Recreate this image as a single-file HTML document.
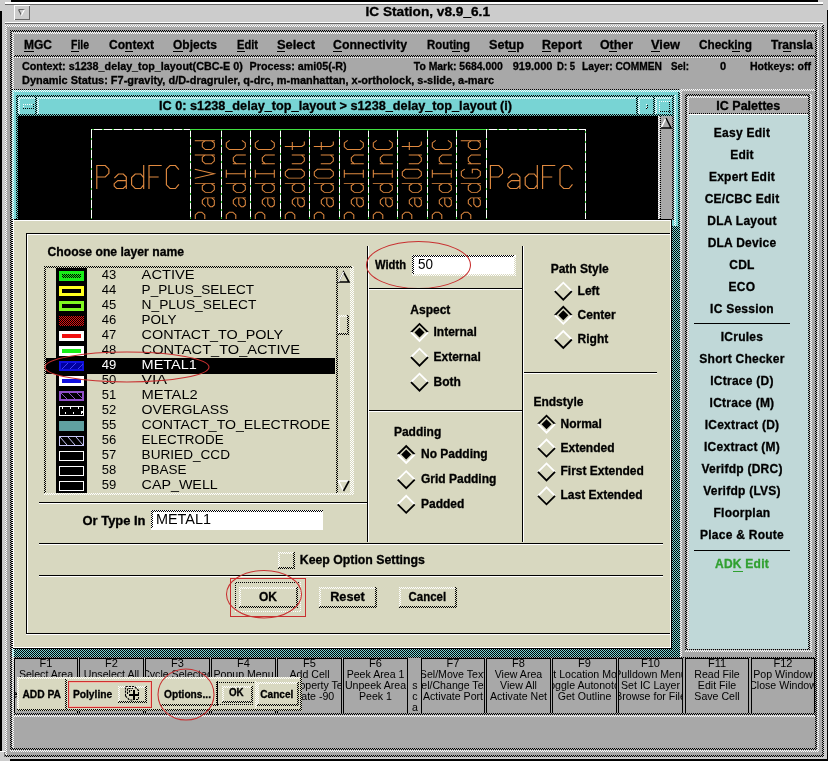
<!DOCTYPE html><html><head><meta charset="utf-8"><style>html,body{margin:0;padding:0;background:#a8a8a8;overflow:hidden}svg{display:block;will-change:transform}text{font-family:"Liberation Sans",sans-serif}</style></head><body>
<svg width="828" height="761" viewBox="0 0 828 761" shape-rendering="crispEdges">
<defs><pattern id="k" width="2" height="2" patternUnits="userSpaceOnUse"><rect width="1" height="1" fill="#000"/><rect x="1" y="1" width="1" height="1" fill="#000"/></pattern><pattern id="w" width="2" height="2" patternUnits="userSpaceOnUse"><rect width="1" height="1" fill="#fff"/><rect x="1" y="1" width="1" height="1" fill="#fff"/></pattern><pattern id="k2" width="2" height="2" patternUnits="userSpaceOnUse"><rect x="1" width="1" height="1" fill="#000"/><rect y="1" width="1" height="1" fill="#000"/></pattern><pattern id="w2" width="2" height="2" patternUnits="userSpaceOnUse"><rect x="1" width="1" height="1" fill="#fff"/><rect y="1" width="1" height="1" fill="#fff"/></pattern></defs>
<rect x="0" y="0" width="828" height="761" fill="#000" />
<rect x="2" y="2" width="825" height="757" fill="#cccccc" />
<rect x="5" y="25" width="818" height="732" fill="#a8a8a8" />
<rect x="5" y="25" width="818" height="732" fill="url(#w)" />
<rect x="822" y="25" width="2" height="732" fill="url(#k)" />
<rect x="5" y="755" width="819" height="2" fill="url(#k)" />
<rect x="7" y="27" width="815" height="728" fill="#a8a8a8" />
<rect x="2" y="2" width="824" height="22" fill="#cccccc" />
<rect x="0" y="0" width="11" height="2" fill="#cccccc" />
<rect x="0" y="0" width="2" height="11" fill="#cccccc" />
<rect x="818" y="0" width="10" height="2" fill="#cccccc" />
<rect x="826" y="0" width="2" height="10" fill="#cccccc" />
<rect x="11" y="0" width="807" height="2" fill="#000" />
<rect x="5" y="2" width="818" height="2" fill="#fff" />
<rect x="5" y="4" width="818" height="1" fill="#666" />
<rect x="5" y="22" width="818" height="1" fill="#fff" />
<rect x="5" y="23" width="818" height="1" fill="#666" />
<rect x="14" y="5" width="16" height="15" fill="#cccccc" />
<rect x="14" y="5" width="16" height="1" fill="#fff" />
<rect x="14" y="5" width="1" height="15" fill="#fff" />
<rect x="15" y="19" width="15" height="1" fill="#666" />
<rect x="29" y="6" width="1" height="14" fill="#666" />
<path d="M18.5 9.5 L24.5 9.5" stroke="#666" stroke-width="1" fill="none"/>
<path d="M18.5 9.5 L21.3 15" stroke="#555" stroke-width="1.1" fill="none" shape-rendering="auto"/>
<path d="M24.5 9.5 L21.3 15.5" stroke="#fff" stroke-width="1.1" fill="none" shape-rendering="auto"/>
<text x="365.5" y="15.5" font-size="12" font-weight="bold" fill="#000" stroke="#000" stroke-width="0.3" text-anchor="start" textLength="124.5" lengthAdjust="spacingAndGlyphs" >IC Station, v8.9_6.1</text>
<rect x="12" y="32" width="803" height="23" fill="#a8a8a8" />
<rect x="12" y="55" width="803" height="2" fill="url(#k)" />
<rect x="12" y="57" width="803" height="1" fill="url(#w)" />
<text x="24" y="49" font-size="12" font-weight="bold" fill="#000" stroke="#000" stroke-width="0.3" text-anchor="start" textLength="28" lengthAdjust="spacingAndGlyphs" >MGC</text>
<text x="71" y="49" font-size="12" font-weight="bold" fill="#000" stroke="#000" stroke-width="0.3" text-anchor="start" textLength="18" lengthAdjust="spacingAndGlyphs" >File</text>
<text x="109" y="49" font-size="12" font-weight="bold" fill="#000" stroke="#000" stroke-width="0.3" text-anchor="start" textLength="45" lengthAdjust="spacingAndGlyphs" >Context</text>
<text x="173" y="49" font-size="12" font-weight="bold" fill="#000" stroke="#000" stroke-width="0.3" text-anchor="start" textLength="44" lengthAdjust="spacingAndGlyphs" >Objects</text>
<text x="237" y="49" font-size="12" font-weight="bold" fill="#000" stroke="#000" stroke-width="0.3" text-anchor="start" textLength="21" lengthAdjust="spacingAndGlyphs" >Edit</text>
<text x="277" y="49" font-size="12" font-weight="bold" fill="#000" stroke="#000" stroke-width="0.3" text-anchor="start" textLength="38" lengthAdjust="spacingAndGlyphs" >Select</text>
<text x="333" y="49" font-size="12" font-weight="bold" fill="#000" stroke="#000" stroke-width="0.3" text-anchor="start" textLength="74" lengthAdjust="spacingAndGlyphs" >Connectivity</text>
<text x="427" y="49" font-size="12" font-weight="bold" fill="#000" stroke="#000" stroke-width="0.3" text-anchor="start" textLength="43" lengthAdjust="spacingAndGlyphs" >Routing</text>
<text x="489" y="49" font-size="12" font-weight="bold" fill="#000" stroke="#000" stroke-width="0.3" text-anchor="start" textLength="35" lengthAdjust="spacingAndGlyphs" >Setup</text>
<text x="542" y="49" font-size="12" font-weight="bold" fill="#000" stroke="#000" stroke-width="0.3" text-anchor="start" textLength="40" lengthAdjust="spacingAndGlyphs" >Report</text>
<text x="600" y="49" font-size="12" font-weight="bold" fill="#000" stroke="#000" stroke-width="0.3" text-anchor="start" textLength="33" lengthAdjust="spacingAndGlyphs" >Other</text>
<text x="651" y="49" font-size="12" font-weight="bold" fill="#000" stroke="#000" stroke-width="0.3" text-anchor="start" textLength="29" lengthAdjust="spacingAndGlyphs" >View</text>
<text x="699" y="49" font-size="12" font-weight="bold" fill="#000" stroke="#000" stroke-width="0.3" text-anchor="start" textLength="53" lengthAdjust="spacingAndGlyphs" >Checking</text>
<text x="771" y="49" font-size="12" font-weight="bold" fill="#000" stroke="#000" stroke-width="0.3" text-anchor="start" textLength="42" lengthAdjust="spacingAndGlyphs" >Transla</text>
<rect x="24" y="51" width="10" height="1" fill="#000" />
<rect x="71" y="51" width="8" height="1" fill="#000" />
<rect x="125" y="51" width="8" height="1" fill="#000" />
<rect x="173" y="51" width="10" height="1" fill="#000" />
<rect x="237" y="51" width="8" height="1" fill="#000" />
<rect x="277" y="51" width="8" height="1" fill="#000" />
<rect x="333" y="51" width="9" height="1" fill="#000" />
<rect x="452" y="51" width="8" height="1" fill="#000" />
<rect x="508" y="51" width="8" height="1" fill="#000" />
<rect x="542" y="51" width="9" height="1" fill="#000" />
<rect x="609" y="51" width="8" height="1" fill="#000" />
<rect x="651" y="51" width="9" height="1" fill="#000" />
<rect x="732" y="51" width="8" height="1" fill="#000" />
<rect x="783" y="51" width="8" height="1" fill="#000" />
<text x="22" y="69.5" font-size="11" font-weight="bold" fill="#000" stroke="#000" stroke-width="0.3" text-anchor="start" textLength="220.8" lengthAdjust="spacingAndGlyphs" >Context: s1238_delay_top_layout(CBC-E 0)</text>
<text x="249.6" y="69.5" font-size="11" font-weight="bold" fill="#000" stroke="#000" stroke-width="0.3" text-anchor="start" textLength="97" lengthAdjust="spacingAndGlyphs" >Process: ami05(-R)</text>
<text x="413.8" y="69.5" font-size="11" font-weight="bold" fill="#000" stroke="#000" stroke-width="0.3" text-anchor="start" textLength="89" lengthAdjust="spacingAndGlyphs" >To Mark: 5684.000</text>
<text x="512.7" y="69.5" font-size="11" font-weight="bold" fill="#000" stroke="#000" stroke-width="0.3" text-anchor="start" >919.000</text>
<text x="557" y="69.5" font-size="11" font-weight="bold" fill="#000" stroke="#000" stroke-width="0.3" text-anchor="start" textLength="18" lengthAdjust="spacingAndGlyphs" >D: 5</text>
<text x="582" y="69.5" font-size="11" font-weight="bold" fill="#000" stroke="#000" stroke-width="0.3" text-anchor="start" textLength="80" lengthAdjust="spacingAndGlyphs" >Layer: COMMEN</text>
<text x="671" y="69.5" font-size="11" font-weight="bold" fill="#000" stroke="#000" stroke-width="0.3" text-anchor="start" textLength="18" lengthAdjust="spacingAndGlyphs" >Sel:</text>
<text x="720" y="69.5" font-size="11" font-weight="bold" fill="#000" stroke="#000" stroke-width="0.3" text-anchor="start" >0</text>
<text x="750" y="69.5" font-size="11" font-weight="bold" fill="#000" stroke="#000" stroke-width="0.3" text-anchor="start" textLength="61" lengthAdjust="spacingAndGlyphs" >Hotkeys: off</text>
<text x="22" y="84" font-size="11" font-weight="bold" fill="#000" stroke="#000" stroke-width="0.3" text-anchor="start" textLength="472" lengthAdjust="spacingAndGlyphs" >Dynamic Status: F7-gravity, d/D-dragruler, q-drc, m-manhattan, x-ortholock, s-slide, a-marc</text>
<rect x="12" y="89" width="1" height="1" fill="#000" />
<rect x="14" y="89" width="1" height="1" fill="#000" />
<rect x="16" y="89" width="1" height="1" fill="#000" />
<rect x="18" y="89" width="1" height="1" fill="#000" />
<rect x="20" y="89" width="1" height="1" fill="#000" />
<rect x="22" y="89" width="1" height="1" fill="#000" />
<rect x="24" y="89" width="1" height="1" fill="#000" />
<rect x="26" y="89" width="1" height="1" fill="#000" />
<rect x="28" y="89" width="1" height="1" fill="#000" />
<rect x="30" y="89" width="1" height="1" fill="#000" />
<rect x="32" y="89" width="1" height="1" fill="#000" />
<rect x="34" y="89" width="1" height="1" fill="#000" />
<rect x="36" y="89" width="1" height="1" fill="#000" />
<rect x="38" y="89" width="1" height="1" fill="#000" />
<rect x="40" y="89" width="1" height="1" fill="#000" />
<rect x="42" y="89" width="1" height="1" fill="#000" />
<rect x="44" y="89" width="1" height="1" fill="#000" />
<rect x="46" y="89" width="1" height="1" fill="#000" />
<rect x="48" y="89" width="1" height="1" fill="#000" />
<rect x="50" y="89" width="1" height="1" fill="#000" />
<rect x="52" y="89" width="1" height="1" fill="#000" />
<rect x="54" y="89" width="1" height="1" fill="#000" />
<rect x="56" y="89" width="1" height="1" fill="#000" />
<rect x="58" y="89" width="1" height="1" fill="#000" />
<rect x="60" y="89" width="1" height="1" fill="#000" />
<rect x="62" y="89" width="1" height="1" fill="#000" />
<rect x="64" y="89" width="1" height="1" fill="#000" />
<rect x="66" y="89" width="1" height="1" fill="#000" />
<rect x="68" y="89" width="1" height="1" fill="#000" />
<rect x="70" y="89" width="1" height="1" fill="#000" />
<rect x="72" y="89" width="1" height="1" fill="#000" />
<rect x="74" y="89" width="1" height="1" fill="#000" />
<rect x="76" y="89" width="1" height="1" fill="#000" />
<rect x="78" y="89" width="1" height="1" fill="#000" />
<rect x="80" y="89" width="1" height="1" fill="#000" />
<rect x="82" y="89" width="1" height="1" fill="#000" />
<rect x="84" y="89" width="1" height="1" fill="#000" />
<rect x="86" y="89" width="1" height="1" fill="#000" />
<rect x="88" y="89" width="1" height="1" fill="#000" />
<rect x="90" y="89" width="1" height="1" fill="#000" />
<rect x="92" y="89" width="1" height="1" fill="#000" />
<rect x="94" y="89" width="1" height="1" fill="#000" />
<rect x="96" y="89" width="1" height="1" fill="#000" />
<rect x="98" y="89" width="1" height="1" fill="#000" />
<rect x="100" y="89" width="1" height="1" fill="#000" />
<rect x="102" y="89" width="1" height="1" fill="#000" />
<rect x="104" y="89" width="1" height="1" fill="#000" />
<rect x="106" y="89" width="1" height="1" fill="#000" />
<rect x="108" y="89" width="1" height="1" fill="#000" />
<rect x="110" y="89" width="1" height="1" fill="#000" />
<rect x="112" y="89" width="1" height="1" fill="#000" />
<rect x="114" y="89" width="1" height="1" fill="#000" />
<rect x="116" y="89" width="1" height="1" fill="#000" />
<rect x="118" y="89" width="1" height="1" fill="#000" />
<rect x="120" y="89" width="1" height="1" fill="#000" />
<rect x="122" y="89" width="1" height="1" fill="#000" />
<rect x="124" y="89" width="1" height="1" fill="#000" />
<rect x="126" y="89" width="1" height="1" fill="#000" />
<rect x="128" y="89" width="1" height="1" fill="#000" />
<rect x="130" y="89" width="1" height="1" fill="#000" />
<rect x="132" y="89" width="1" height="1" fill="#000" />
<rect x="134" y="89" width="1" height="1" fill="#000" />
<rect x="136" y="89" width="1" height="1" fill="#000" />
<rect x="138" y="89" width="1" height="1" fill="#000" />
<rect x="140" y="89" width="1" height="1" fill="#000" />
<rect x="142" y="89" width="1" height="1" fill="#000" />
<rect x="144" y="89" width="1" height="1" fill="#000" />
<rect x="146" y="89" width="1" height="1" fill="#000" />
<rect x="148" y="89" width="1" height="1" fill="#000" />
<rect x="150" y="89" width="1" height="1" fill="#000" />
<rect x="152" y="89" width="1" height="1" fill="#000" />
<rect x="154" y="89" width="1" height="1" fill="#000" />
<rect x="156" y="89" width="1" height="1" fill="#000" />
<rect x="158" y="89" width="1" height="1" fill="#000" />
<rect x="160" y="89" width="1" height="1" fill="#000" />
<rect x="162" y="89" width="1" height="1" fill="#000" />
<rect x="164" y="89" width="1" height="1" fill="#000" />
<rect x="166" y="89" width="1" height="1" fill="#000" />
<rect x="168" y="89" width="1" height="1" fill="#000" />
<rect x="170" y="89" width="1" height="1" fill="#000" />
<rect x="172" y="89" width="1" height="1" fill="#000" />
<rect x="174" y="89" width="1" height="1" fill="#000" />
<rect x="176" y="89" width="1" height="1" fill="#000" />
<rect x="178" y="89" width="1" height="1" fill="#000" />
<rect x="180" y="89" width="1" height="1" fill="#000" />
<rect x="182" y="89" width="1" height="1" fill="#000" />
<rect x="184" y="89" width="1" height="1" fill="#000" />
<rect x="186" y="89" width="1" height="1" fill="#000" />
<rect x="188" y="89" width="1" height="1" fill="#000" />
<rect x="190" y="89" width="1" height="1" fill="#000" />
<rect x="192" y="89" width="1" height="1" fill="#000" />
<rect x="194" y="89" width="1" height="1" fill="#000" />
<rect x="196" y="89" width="1" height="1" fill="#000" />
<rect x="198" y="89" width="1" height="1" fill="#000" />
<rect x="200" y="89" width="1" height="1" fill="#000" />
<rect x="202" y="89" width="1" height="1" fill="#000" />
<rect x="204" y="89" width="1" height="1" fill="#000" />
<rect x="206" y="89" width="1" height="1" fill="#000" />
<rect x="208" y="89" width="1" height="1" fill="#000" />
<rect x="210" y="89" width="1" height="1" fill="#000" />
<rect x="212" y="89" width="1" height="1" fill="#000" />
<rect x="214" y="89" width="1" height="1" fill="#000" />
<rect x="216" y="89" width="1" height="1" fill="#000" />
<rect x="218" y="89" width="1" height="1" fill="#000" />
<rect x="220" y="89" width="1" height="1" fill="#000" />
<rect x="222" y="89" width="1" height="1" fill="#000" />
<rect x="224" y="89" width="1" height="1" fill="#000" />
<rect x="226" y="89" width="1" height="1" fill="#000" />
<rect x="228" y="89" width="1" height="1" fill="#000" />
<rect x="230" y="89" width="1" height="1" fill="#000" />
<rect x="232" y="89" width="1" height="1" fill="#000" />
<rect x="234" y="89" width="1" height="1" fill="#000" />
<rect x="236" y="89" width="1" height="1" fill="#000" />
<rect x="238" y="89" width="1" height="1" fill="#000" />
<rect x="240" y="89" width="1" height="1" fill="#000" />
<rect x="242" y="89" width="1" height="1" fill="#000" />
<rect x="244" y="89" width="1" height="1" fill="#000" />
<rect x="246" y="89" width="1" height="1" fill="#000" />
<rect x="248" y="89" width="1" height="1" fill="#000" />
<rect x="250" y="89" width="1" height="1" fill="#000" />
<rect x="252" y="89" width="1" height="1" fill="#000" />
<rect x="254" y="89" width="1" height="1" fill="#000" />
<rect x="256" y="89" width="1" height="1" fill="#000" />
<rect x="258" y="89" width="1" height="1" fill="#000" />
<rect x="260" y="89" width="1" height="1" fill="#000" />
<rect x="262" y="89" width="1" height="1" fill="#000" />
<rect x="264" y="89" width="1" height="1" fill="#000" />
<rect x="266" y="89" width="1" height="1" fill="#000" />
<rect x="268" y="89" width="1" height="1" fill="#000" />
<rect x="270" y="89" width="1" height="1" fill="#000" />
<rect x="272" y="89" width="1" height="1" fill="#000" />
<rect x="274" y="89" width="1" height="1" fill="#000" />
<rect x="276" y="89" width="1" height="1" fill="#000" />
<rect x="278" y="89" width="1" height="1" fill="#000" />
<rect x="280" y="89" width="1" height="1" fill="#000" />
<rect x="282" y="89" width="1" height="1" fill="#000" />
<rect x="284" y="89" width="1" height="1" fill="#000" />
<rect x="286" y="89" width="1" height="1" fill="#000" />
<rect x="288" y="89" width="1" height="1" fill="#000" />
<rect x="290" y="89" width="1" height="1" fill="#000" />
<rect x="292" y="89" width="1" height="1" fill="#000" />
<rect x="294" y="89" width="1" height="1" fill="#000" />
<rect x="296" y="89" width="1" height="1" fill="#000" />
<rect x="298" y="89" width="1" height="1" fill="#000" />
<rect x="300" y="89" width="1" height="1" fill="#000" />
<rect x="302" y="89" width="1" height="1" fill="#000" />
<rect x="304" y="89" width="1" height="1" fill="#000" />
<rect x="306" y="89" width="1" height="1" fill="#000" />
<rect x="308" y="89" width="1" height="1" fill="#000" />
<rect x="310" y="89" width="1" height="1" fill="#000" />
<rect x="312" y="89" width="1" height="1" fill="#000" />
<rect x="314" y="89" width="1" height="1" fill="#000" />
<rect x="316" y="89" width="1" height="1" fill="#000" />
<rect x="318" y="89" width="1" height="1" fill="#000" />
<rect x="320" y="89" width="1" height="1" fill="#000" />
<rect x="322" y="89" width="1" height="1" fill="#000" />
<rect x="324" y="89" width="1" height="1" fill="#000" />
<rect x="326" y="89" width="1" height="1" fill="#000" />
<rect x="328" y="89" width="1" height="1" fill="#000" />
<rect x="330" y="89" width="1" height="1" fill="#000" />
<rect x="332" y="89" width="1" height="1" fill="#000" />
<rect x="334" y="89" width="1" height="1" fill="#000" />
<rect x="336" y="89" width="1" height="1" fill="#000" />
<rect x="338" y="89" width="1" height="1" fill="#000" />
<rect x="340" y="89" width="1" height="1" fill="#000" />
<rect x="342" y="89" width="1" height="1" fill="#000" />
<rect x="344" y="89" width="1" height="1" fill="#000" />
<rect x="346" y="89" width="1" height="1" fill="#000" />
<rect x="348" y="89" width="1" height="1" fill="#000" />
<rect x="350" y="89" width="1" height="1" fill="#000" />
<rect x="352" y="89" width="1" height="1" fill="#000" />
<rect x="354" y="89" width="1" height="1" fill="#000" />
<rect x="356" y="89" width="1" height="1" fill="#000" />
<rect x="358" y="89" width="1" height="1" fill="#000" />
<rect x="360" y="89" width="1" height="1" fill="#000" />
<rect x="362" y="89" width="1" height="1" fill="#000" />
<rect x="364" y="89" width="1" height="1" fill="#000" />
<rect x="366" y="89" width="1" height="1" fill="#000" />
<rect x="368" y="89" width="1" height="1" fill="#000" />
<rect x="370" y="89" width="1" height="1" fill="#000" />
<rect x="372" y="89" width="1" height="1" fill="#000" />
<rect x="374" y="89" width="1" height="1" fill="#000" />
<rect x="376" y="89" width="1" height="1" fill="#000" />
<rect x="378" y="89" width="1" height="1" fill="#000" />
<rect x="380" y="89" width="1" height="1" fill="#000" />
<rect x="382" y="89" width="1" height="1" fill="#000" />
<rect x="384" y="89" width="1" height="1" fill="#000" />
<rect x="386" y="89" width="1" height="1" fill="#000" />
<rect x="388" y="89" width="1" height="1" fill="#000" />
<rect x="390" y="89" width="1" height="1" fill="#000" />
<rect x="392" y="89" width="1" height="1" fill="#000" />
<rect x="394" y="89" width="1" height="1" fill="#000" />
<rect x="396" y="89" width="1" height="1" fill="#000" />
<rect x="398" y="89" width="1" height="1" fill="#000" />
<rect x="400" y="89" width="1" height="1" fill="#000" />
<rect x="402" y="89" width="1" height="1" fill="#000" />
<rect x="404" y="89" width="1" height="1" fill="#000" />
<rect x="406" y="89" width="1" height="1" fill="#000" />
<rect x="408" y="89" width="1" height="1" fill="#000" />
<rect x="410" y="89" width="1" height="1" fill="#000" />
<rect x="412" y="89" width="1" height="1" fill="#000" />
<rect x="414" y="89" width="1" height="1" fill="#000" />
<rect x="416" y="89" width="1" height="1" fill="#000" />
<rect x="418" y="89" width="1" height="1" fill="#000" />
<rect x="420" y="89" width="1" height="1" fill="#000" />
<rect x="422" y="89" width="1" height="1" fill="#000" />
<rect x="424" y="89" width="1" height="1" fill="#000" />
<rect x="426" y="89" width="1" height="1" fill="#000" />
<rect x="428" y="89" width="1" height="1" fill="#000" />
<rect x="430" y="89" width="1" height="1" fill="#000" />
<rect x="432" y="89" width="1" height="1" fill="#000" />
<rect x="434" y="89" width="1" height="1" fill="#000" />
<rect x="436" y="89" width="1" height="1" fill="#000" />
<rect x="438" y="89" width="1" height="1" fill="#000" />
<rect x="440" y="89" width="1" height="1" fill="#000" />
<rect x="442" y="89" width="1" height="1" fill="#000" />
<rect x="444" y="89" width="1" height="1" fill="#000" />
<rect x="446" y="89" width="1" height="1" fill="#000" />
<rect x="448" y="89" width="1" height="1" fill="#000" />
<rect x="450" y="89" width="1" height="1" fill="#000" />
<rect x="452" y="89" width="1" height="1" fill="#000" />
<rect x="454" y="89" width="1" height="1" fill="#000" />
<rect x="456" y="89" width="1" height="1" fill="#000" />
<rect x="458" y="89" width="1" height="1" fill="#000" />
<rect x="460" y="89" width="1" height="1" fill="#000" />
<rect x="462" y="89" width="1" height="1" fill="#000" />
<rect x="464" y="89" width="1" height="1" fill="#000" />
<rect x="466" y="89" width="1" height="1" fill="#000" />
<rect x="468" y="89" width="1" height="1" fill="#000" />
<rect x="470" y="89" width="1" height="1" fill="#000" />
<rect x="472" y="89" width="1" height="1" fill="#000" />
<rect x="474" y="89" width="1" height="1" fill="#000" />
<rect x="476" y="89" width="1" height="1" fill="#000" />
<rect x="478" y="89" width="1" height="1" fill="#000" />
<rect x="480" y="89" width="1" height="1" fill="#000" />
<rect x="482" y="89" width="1" height="1" fill="#000" />
<rect x="484" y="89" width="1" height="1" fill="#000" />
<rect x="486" y="89" width="1" height="1" fill="#000" />
<rect x="488" y="89" width="1" height="1" fill="#000" />
<rect x="490" y="89" width="1" height="1" fill="#000" />
<rect x="492" y="89" width="1" height="1" fill="#000" />
<rect x="494" y="89" width="1" height="1" fill="#000" />
<rect x="496" y="89" width="1" height="1" fill="#000" />
<rect x="498" y="89" width="1" height="1" fill="#000" />
<rect x="500" y="89" width="1" height="1" fill="#000" />
<rect x="502" y="89" width="1" height="1" fill="#000" />
<rect x="504" y="89" width="1" height="1" fill="#000" />
<rect x="506" y="89" width="1" height="1" fill="#000" />
<rect x="508" y="89" width="1" height="1" fill="#000" />
<rect x="510" y="89" width="1" height="1" fill="#000" />
<rect x="512" y="89" width="1" height="1" fill="#000" />
<rect x="514" y="89" width="1" height="1" fill="#000" />
<rect x="516" y="89" width="1" height="1" fill="#000" />
<rect x="518" y="89" width="1" height="1" fill="#000" />
<rect x="520" y="89" width="1" height="1" fill="#000" />
<rect x="522" y="89" width="1" height="1" fill="#000" />
<rect x="524" y="89" width="1" height="1" fill="#000" />
<rect x="526" y="89" width="1" height="1" fill="#000" />
<rect x="528" y="89" width="1" height="1" fill="#000" />
<rect x="530" y="89" width="1" height="1" fill="#000" />
<rect x="532" y="89" width="1" height="1" fill="#000" />
<rect x="534" y="89" width="1" height="1" fill="#000" />
<rect x="536" y="89" width="1" height="1" fill="#000" />
<rect x="538" y="89" width="1" height="1" fill="#000" />
<rect x="540" y="89" width="1" height="1" fill="#000" />
<rect x="542" y="89" width="1" height="1" fill="#000" />
<rect x="544" y="89" width="1" height="1" fill="#000" />
<rect x="546" y="89" width="1" height="1" fill="#000" />
<rect x="548" y="89" width="1" height="1" fill="#000" />
<rect x="550" y="89" width="1" height="1" fill="#000" />
<rect x="552" y="89" width="1" height="1" fill="#000" />
<rect x="554" y="89" width="1" height="1" fill="#000" />
<rect x="556" y="89" width="1" height="1" fill="#000" />
<rect x="558" y="89" width="1" height="1" fill="#000" />
<rect x="560" y="89" width="1" height="1" fill="#000" />
<rect x="562" y="89" width="1" height="1" fill="#000" />
<rect x="564" y="89" width="1" height="1" fill="#000" />
<rect x="566" y="89" width="1" height="1" fill="#000" />
<rect x="568" y="89" width="1" height="1" fill="#000" />
<rect x="570" y="89" width="1" height="1" fill="#000" />
<rect x="572" y="89" width="1" height="1" fill="#000" />
<rect x="574" y="89" width="1" height="1" fill="#000" />
<rect x="576" y="89" width="1" height="1" fill="#000" />
<rect x="578" y="89" width="1" height="1" fill="#000" />
<rect x="580" y="89" width="1" height="1" fill="#000" />
<rect x="582" y="89" width="1" height="1" fill="#000" />
<rect x="584" y="89" width="1" height="1" fill="#000" />
<rect x="586" y="89" width="1" height="1" fill="#000" />
<rect x="588" y="89" width="1" height="1" fill="#000" />
<rect x="590" y="89" width="1" height="1" fill="#000" />
<rect x="592" y="89" width="1" height="1" fill="#000" />
<rect x="594" y="89" width="1" height="1" fill="#000" />
<rect x="596" y="89" width="1" height="1" fill="#000" />
<rect x="598" y="89" width="1" height="1" fill="#000" />
<rect x="600" y="89" width="1" height="1" fill="#000" />
<rect x="602" y="89" width="1" height="1" fill="#000" />
<rect x="604" y="89" width="1" height="1" fill="#000" />
<rect x="606" y="89" width="1" height="1" fill="#000" />
<rect x="608" y="89" width="1" height="1" fill="#000" />
<rect x="610" y="89" width="1" height="1" fill="#000" />
<rect x="612" y="89" width="1" height="1" fill="#000" />
<rect x="614" y="89" width="1" height="1" fill="#000" />
<rect x="616" y="89" width="1" height="1" fill="#000" />
<rect x="618" y="89" width="1" height="1" fill="#000" />
<rect x="620" y="89" width="1" height="1" fill="#000" />
<rect x="622" y="89" width="1" height="1" fill="#000" />
<rect x="624" y="89" width="1" height="1" fill="#000" />
<rect x="626" y="89" width="1" height="1" fill="#000" />
<rect x="628" y="89" width="1" height="1" fill="#000" />
<rect x="630" y="89" width="1" height="1" fill="#000" />
<rect x="632" y="89" width="1" height="1" fill="#000" />
<rect x="634" y="89" width="1" height="1" fill="#000" />
<rect x="636" y="89" width="1" height="1" fill="#000" />
<rect x="638" y="89" width="1" height="1" fill="#000" />
<rect x="640" y="89" width="1" height="1" fill="#000" />
<rect x="642" y="89" width="1" height="1" fill="#000" />
<rect x="644" y="89" width="1" height="1" fill="#000" />
<rect x="646" y="89" width="1" height="1" fill="#000" />
<rect x="648" y="89" width="1" height="1" fill="#000" />
<rect x="650" y="89" width="1" height="1" fill="#000" />
<rect x="652" y="89" width="1" height="1" fill="#000" />
<rect x="654" y="89" width="1" height="1" fill="#000" />
<rect x="656" y="89" width="1" height="1" fill="#000" />
<rect x="658" y="89" width="1" height="1" fill="#000" />
<rect x="660" y="89" width="1" height="1" fill="#000" />
<rect x="662" y="89" width="1" height="1" fill="#000" />
<rect x="664" y="89" width="1" height="1" fill="#000" />
<rect x="666" y="89" width="1" height="1" fill="#000" />
<rect x="668" y="89" width="1" height="1" fill="#000" />
<rect x="670" y="89" width="1" height="1" fill="#000" />
<rect x="672" y="89" width="1" height="1" fill="#000" />
<rect x="674" y="89" width="1" height="1" fill="#000" />
<rect x="676" y="89" width="1" height="1" fill="#000" />
<rect x="678" y="89" width="1" height="1" fill="#000" />
<rect x="680" y="89" width="135" height="2" fill="url(#w)" />
<rect x="12" y="90" width="668" height="567" fill="#78d4d4" />
<rect x="12" y="90" width="668" height="2" fill="url(#w)" />
<rect x="12" y="90" width="2" height="567" fill="url(#w)" />
<rect x="678" y="92" width="2" height="565" fill="url(#k)" />
<rect x="680" y="90" width="2" height="567" fill="url(#w)" />
<rect x="16" y="95" width="660" height="2" fill="url(#k)" />
<rect x="16" y="95" width="2" height="562" fill="url(#k)" />
<rect x="674" y="95" width="2" height="562" fill="url(#w)" />
<rect x="18" y="97" width="656" height="2" fill="url(#w)" />
<rect x="18" y="97" width="2" height="17" fill="url(#w)" />
<rect x="35" y="97" width="2" height="17" fill="url(#k)" />
<rect x="37" y="99" width="2" height="15" fill="url(#w)" />
<rect x="636" y="97" width="2" height="17" fill="url(#k)" />
<rect x="638" y="99" width="2" height="15" fill="url(#w)" />
<rect x="653" y="97" width="2" height="17" fill="url(#k)" />
<rect x="655" y="99" width="2" height="15" fill="url(#w)" />
<rect x="672" y="97" width="2" height="19" fill="url(#k)" />
<rect x="18" y="114" width="656" height="2" fill="url(#k)" />
<rect x="23" y="104" width="1" height="1" fill="#fff" />
<rect x="25" y="104" width="1" height="1" fill="#fff" />
<rect x="27" y="104" width="1" height="1" fill="#fff" />
<rect x="29" y="104" width="1" height="1" fill="#fff" />
<rect x="31" y="104" width="1" height="1" fill="#fff" />
<rect x="33" y="104" width="1" height="1" fill="#fff" />
<rect x="23" y="106" width="1" height="1" fill="#fff" />
<rect x="23" y="108" width="1" height="1" fill="#000" />
<rect x="25" y="108" width="1" height="1" fill="#000" />
<rect x="27" y="108" width="1" height="1" fill="#000" />
<rect x="29" y="108" width="1" height="1" fill="#000" />
<rect x="31" y="108" width="1" height="1" fill="#000" />
<rect x="33" y="108" width="1" height="1" fill="#000" />
<rect x="33" y="106" width="1" height="1" fill="#000" />
<rect x="33" y="104" width="1" height="1" fill="#000" />
<rect x="646" y="104" width="1" height="1" fill="#fff" />
<rect x="647" y="105" width="1" height="1" fill="#000" />
<rect x="646" y="107" width="1" height="1" fill="#fff" />
<rect x="646" y="108" width="1" height="1" fill="#000" />
<rect x="647" y="107" width="1" height="1" fill="#000" />
<rect x="659" y="101" width="1" height="1" fill="#fff" />
<rect x="659" y="101" width="1" height="1" fill="#fff" />
<rect x="661" y="101" width="1" height="1" fill="#fff" />
<rect x="659" y="103" width="1" height="1" fill="#fff" />
<rect x="663" y="101" width="1" height="1" fill="#fff" />
<rect x="659" y="105" width="1" height="1" fill="#fff" />
<rect x="665" y="101" width="1" height="1" fill="#fff" />
<rect x="659" y="107" width="1" height="1" fill="#fff" />
<rect x="667" y="101" width="1" height="1" fill="#fff" />
<rect x="659" y="109" width="1" height="1" fill="#fff" />
<rect x="669" y="101" width="1" height="1" fill="#fff" />
<rect x="659" y="111" width="1" height="1" fill="#fff" />
<rect x="660" y="111" width="1" height="1" fill="#000" />
<rect x="669" y="102" width="1" height="1" fill="#000" />
<rect x="662" y="111" width="1" height="1" fill="#000" />
<rect x="669" y="104" width="1" height="1" fill="#000" />
<rect x="664" y="111" width="1" height="1" fill="#000" />
<rect x="669" y="106" width="1" height="1" fill="#000" />
<rect x="666" y="111" width="1" height="1" fill="#000" />
<rect x="669" y="108" width="1" height="1" fill="#000" />
<rect x="668" y="111" width="1" height="1" fill="#000" />
<rect x="669" y="110" width="1" height="1" fill="#000" />
<rect x="670" y="111" width="1" height="1" fill="#000" />
<rect x="669" y="112" width="1" height="1" fill="#000" />
<text x="159" y="110" font-size="12" font-weight="bold" fill="#000" stroke="#000" stroke-width="0.3" text-anchor="start" textLength="353" lengthAdjust="spacingAndGlyphs" >IC 0: s1238_delay_top_layout &gt; s1238_delay_top_layout (i)</text>
<rect x="18" y="116" width="640" height="104" fill="#000" />
<rect x="658" y="116" width="16" height="104" fill="#a8a8a8" />
<rect x="658" y="116" width="2" height="104" fill="url(#w)" />
<rect x="660" y="116" width="1" height="104" fill="url(#k)" />
<rect x="672" y="116" width="2" height="104" fill="url(#k)" />
<path d="M666 118 L661 128 L671 128 Z" fill="#a8a8a8" shape-rendering="auto"/>
<path d="M666 118 L661 128" stroke="#fff" stroke-width="1.5" shape-rendering="auto"/>
<path d="M666 118 L671 128 L661 128" stroke="#000" stroke-width="1.5" fill="none" shape-rendering="auto"/>
<defs><clipPath id="canv"><rect x="18" y="116" width="640" height="104"/></clipPath></defs>
<g clip-path="url(#canv)">
<rect x="91.5" y="129.5" width="99" height="111" fill="none" stroke="#fff" stroke-width="1"/>
<rect x="91.5" y="129.5" width="99" height="111" fill="none" stroke="#30c030" stroke-width="1" stroke-dasharray="2 8"/>
<rect x="486.5" y="129.5" width="99" height="111" fill="none" stroke="#fff" stroke-width="1"/>
<rect x="486.5" y="129.5" width="99" height="111" fill="none" stroke="#30c030" stroke-width="1" stroke-dasharray="2 8"/>
<g transform="translate(96.8 188.5) scale(1.21)" fill="none" stroke="#e08a40" stroke-width="0.95" stroke-linecap="square" stroke-linejoin="miter" shape-rendering="auto"><path transform="translate(0.00 0)" d="M0 0 V-19 H7 L10 -16 V-12.5 L7 -9.5 H0"/><path transform="translate(14.38 0)" d="M0.5 -9 L3.5 -12 H7.5 L10 -9.5 V0 M10 -6.5 H3 L0 -4 V-2 L2 0 H7.5 L10 -2.5"/><path transform="translate(28.76 0)" d="M10 -19 V0 M10 -3 L7.5 0 H3 L0 -3 V-9 L3 -12 H7.5 L10 -9"/><path transform="translate(43.14 0)" d="M10 -19 H0 V0 M0 -9.5 H7.5"/><path transform="translate(57.52 0)" d="M10 -16 L7.5 -19 H3 L0 -16 V-3 L3 0 H7.5 L10 -3"/></g>
<g transform="translate(490.4 188.5) scale(1.21)" fill="none" stroke="#e08a40" stroke-width="0.95" stroke-linecap="square" stroke-linejoin="miter" shape-rendering="auto"><path transform="translate(0.00 0)" d="M0 0 V-19 H7 L10 -16 V-12.5 L7 -9.5 H0"/><path transform="translate(14.38 0)" d="M0.5 -9 L3.5 -12 H7.5 L10 -9.5 V0 M10 -6.5 H3 L0 -4 V-2 L2 0 H7.5 L10 -2.5"/><path transform="translate(28.76 0)" d="M10 -19 V0 M10 -3 L7.5 0 H3 L0 -3 V-9 L3 -12 H7.5 L10 -9"/><path transform="translate(43.14 0)" d="M10 -19 H0 V0 M0 -9.5 H7.5"/><path transform="translate(57.52 0)" d="M10 -16 L7.5 -19 H3 L0 -16 V-3 L3 0 H7.5 L10 -3"/></g>
<line x1="190.5" y1="129" x2="190.5" y2="220" stroke="#fff"/>
<line x1="190.5" y1="129" x2="190.5" y2="220" stroke="#30c030" stroke-dasharray="2 6"/>
<g transform="translate(214.3 221) rotate(-90) scale(0.88 1)" fill="none" stroke="#e08a40" stroke-width="1.05" stroke-linecap="square" stroke-linejoin="miter" shape-rendering="auto"><path transform="translate(0.00 0)" d="M0 0 V-19 H7 L10 -16 V-12.5 L7 -9.5 H0"/><path transform="translate(16.25 0)" d="M0.5 -9 L3.5 -12 H7.5 L10 -9.5 V0 M10 -6.5 H3 L0 -4 V-2 L2 0 H7.5 L10 -2.5"/><path transform="translate(32.50 0)" d="M10 -19 V0 M10 -3 L7.5 0 H3 L0 -3 V-9 L3 -12 H7.5 L10 -9"/><path transform="translate(48.75 0)" d="M0 -19 L5 0 L10 -19"/><path transform="translate(65.00 0)" d="M10 -19 V0 M10 -3 L7.5 0 H3 L0 -3 V-9 L3 -12 H7.5 L10 -9"/><path transform="translate(81.25 0)" d="M10 -19 V0 M10 -3 L7.5 0 H3 L0 -3 V-9 L3 -12 H7.5 L10 -9"/></g>
<line x1="221.5" y1="129" x2="221.5" y2="220" stroke="#fff"/>
<line x1="221.5" y1="129" x2="221.5" y2="220" stroke="#30c030" stroke-dasharray="2 6"/>
<g transform="translate(245.3 221) rotate(-90) scale(0.88 1)" fill="none" stroke="#e08a40" stroke-width="1.05" stroke-linecap="square" stroke-linejoin="miter" shape-rendering="auto"><path transform="translate(0.00 0)" d="M0 0 V-19 H7 L10 -16 V-12.5 L7 -9.5 H0"/><path transform="translate(16.25 0)" d="M0.5 -9 L3.5 -12 H7.5 L10 -9.5 V0 M10 -6.5 H3 L0 -4 V-2 L2 0 H7.5 L10 -2.5"/><path transform="translate(32.50 0)" d="M10 -19 V0 M10 -3 L7.5 0 H3 L0 -3 V-9 L3 -12 H7.5 L10 -9"/><path transform="translate(48.75 0)" d="M1 -19 H9 M5 -19 V0 M1 0 H9"/><path transform="translate(65.00 0)" d="M0 -12 V0 M0 -9 L3 -12 H7 L10 -9 V0"/><path transform="translate(81.25 0)" d="M10 -16 L7.5 -19 H3 L0 -16 V-3 L3 0 H7.5 L10 -3"/></g>
<line x1="250.5" y1="129" x2="250.5" y2="220" stroke="#fff"/>
<line x1="250.5" y1="129" x2="250.5" y2="220" stroke="#30c030" stroke-dasharray="2 6"/>
<g transform="translate(274.3 221) rotate(-90) scale(0.88 1)" fill="none" stroke="#e08a40" stroke-width="1.05" stroke-linecap="square" stroke-linejoin="miter" shape-rendering="auto"><path transform="translate(0.00 0)" d="M0 0 V-19 H7 L10 -16 V-12.5 L7 -9.5 H0"/><path transform="translate(16.25 0)" d="M0.5 -9 L3.5 -12 H7.5 L10 -9.5 V0 M10 -6.5 H3 L0 -4 V-2 L2 0 H7.5 L10 -2.5"/><path transform="translate(32.50 0)" d="M10 -19 V0 M10 -3 L7.5 0 H3 L0 -3 V-9 L3 -12 H7.5 L10 -9"/><path transform="translate(48.75 0)" d="M1 -19 H9 M5 -19 V0 M1 0 H9"/><path transform="translate(65.00 0)" d="M0 -12 V0 M0 -9 L3 -12 H7 L10 -9 V0"/><path transform="translate(81.25 0)" d="M10 -16 L7.5 -19 H3 L0 -16 V-3 L3 0 H7.5 L10 -3"/></g>
<line x1="280.5" y1="129" x2="280.5" y2="220" stroke="#fff"/>
<line x1="280.5" y1="129" x2="280.5" y2="220" stroke="#30c030" stroke-dasharray="2 6"/>
<g transform="translate(304.3 221) rotate(-90) scale(0.88 1)" fill="none" stroke="#e08a40" stroke-width="1.05" stroke-linecap="square" stroke-linejoin="miter" shape-rendering="auto"><path transform="translate(0.00 0)" d="M0 0 V-19 H7 L10 -16 V-12.5 L7 -9.5 H0"/><path transform="translate(16.25 0)" d="M0.5 -9 L3.5 -12 H7.5 L10 -9.5 V0 M10 -6.5 H3 L0 -4 V-2 L2 0 H7.5 L10 -2.5"/><path transform="translate(32.50 0)" d="M10 -19 V0 M10 -3 L7.5 0 H3 L0 -3 V-9 L3 -12 H7.5 L10 -9"/><path transform="translate(48.75 0)" d="M3 -19 H7 L10 -16 V-3 L7 0 H3 L0 -3 V-16 Z"/><path transform="translate(65.00 0)" d="M0 -12 V-3 L3 0 H7 L10 -3 M10 -12 V0"/><path transform="translate(81.25 0)" d="M3.5 -19 V-2.5 L5.5 0 H8.5 M0 -12 H8"/></g>
<line x1="309.5" y1="129" x2="309.5" y2="220" stroke="#fff"/>
<line x1="309.5" y1="129" x2="309.5" y2="220" stroke="#30c030" stroke-dasharray="2 6"/>
<g transform="translate(333.3 221) rotate(-90) scale(0.88 1)" fill="none" stroke="#e08a40" stroke-width="1.05" stroke-linecap="square" stroke-linejoin="miter" shape-rendering="auto"><path transform="translate(0.00 0)" d="M0 0 V-19 H7 L10 -16 V-12.5 L7 -9.5 H0"/><path transform="translate(16.25 0)" d="M0.5 -9 L3.5 -12 H7.5 L10 -9.5 V0 M10 -6.5 H3 L0 -4 V-2 L2 0 H7.5 L10 -2.5"/><path transform="translate(32.50 0)" d="M10 -19 V0 M10 -3 L7.5 0 H3 L0 -3 V-9 L3 -12 H7.5 L10 -9"/><path transform="translate(48.75 0)" d="M3 -19 H7 L10 -16 V-3 L7 0 H3 L0 -3 V-16 Z"/><path transform="translate(65.00 0)" d="M0 -12 V-3 L3 0 H7 L10 -3 M10 -12 V0"/><path transform="translate(81.25 0)" d="M3.5 -19 V-2.5 L5.5 0 H8.5 M0 -12 H8"/></g>
<line x1="339.5" y1="129" x2="339.5" y2="220" stroke="#fff"/>
<line x1="339.5" y1="129" x2="339.5" y2="220" stroke="#30c030" stroke-dasharray="2 6"/>
<g transform="translate(363.3 221) rotate(-90) scale(0.88 1)" fill="none" stroke="#e08a40" stroke-width="1.05" stroke-linecap="square" stroke-linejoin="miter" shape-rendering="auto"><path transform="translate(0.00 0)" d="M0 0 V-19 H7 L10 -16 V-12.5 L7 -9.5 H0"/><path transform="translate(16.25 0)" d="M0.5 -9 L3.5 -12 H7.5 L10 -9.5 V0 M10 -6.5 H3 L0 -4 V-2 L2 0 H7.5 L10 -2.5"/><path transform="translate(32.50 0)" d="M10 -19 V0 M10 -3 L7.5 0 H3 L0 -3 V-9 L3 -12 H7.5 L10 -9"/><path transform="translate(48.75 0)" d="M1 -19 H9 M5 -19 V0 M1 0 H9"/><path transform="translate(65.00 0)" d="M0 -12 V0 M0 -9 L3 -12 H7 L10 -9 V0"/><path transform="translate(81.25 0)" d="M10 -16 L7.5 -19 H3 L0 -16 V-3 L3 0 H7.5 L10 -3"/></g>
<line x1="368.5" y1="129" x2="368.5" y2="220" stroke="#fff"/>
<line x1="368.5" y1="129" x2="368.5" y2="220" stroke="#30c030" stroke-dasharray="2 6"/>
<g transform="translate(392.3 221) rotate(-90) scale(0.88 1)" fill="none" stroke="#e08a40" stroke-width="1.05" stroke-linecap="square" stroke-linejoin="miter" shape-rendering="auto"><path transform="translate(0.00 0)" d="M0 0 V-19 H7 L10 -16 V-12.5 L7 -9.5 H0"/><path transform="translate(16.25 0)" d="M0.5 -9 L3.5 -12 H7.5 L10 -9.5 V0 M10 -6.5 H3 L0 -4 V-2 L2 0 H7.5 L10 -2.5"/><path transform="translate(32.50 0)" d="M10 -19 V0 M10 -3 L7.5 0 H3 L0 -3 V-9 L3 -12 H7.5 L10 -9"/><path transform="translate(48.75 0)" d="M1 -19 H9 M5 -19 V0 M1 0 H9"/><path transform="translate(65.00 0)" d="M0 -12 V0 M0 -9 L3 -12 H7 L10 -9 V0"/><path transform="translate(81.25 0)" d="M10 -16 L7.5 -19 H3 L0 -16 V-3 L3 0 H7.5 L10 -3"/></g>
<line x1="397.5" y1="129" x2="397.5" y2="220" stroke="#fff"/>
<line x1="397.5" y1="129" x2="397.5" y2="220" stroke="#30c030" stroke-dasharray="2 6"/>
<g transform="translate(421.3 221) rotate(-90) scale(0.88 1)" fill="none" stroke="#e08a40" stroke-width="1.05" stroke-linecap="square" stroke-linejoin="miter" shape-rendering="auto"><path transform="translate(0.00 0)" d="M0 0 V-19 H7 L10 -16 V-12.5 L7 -9.5 H0"/><path transform="translate(16.25 0)" d="M0.5 -9 L3.5 -12 H7.5 L10 -9.5 V0 M10 -6.5 H3 L0 -4 V-2 L2 0 H7.5 L10 -2.5"/><path transform="translate(32.50 0)" d="M10 -19 V0 M10 -3 L7.5 0 H3 L0 -3 V-9 L3 -12 H7.5 L10 -9"/><path transform="translate(48.75 0)" d="M3 -19 H7 L10 -16 V-3 L7 0 H3 L0 -3 V-16 Z"/><path transform="translate(65.00 0)" d="M0 -12 V-3 L3 0 H7 L10 -3 M10 -12 V0"/><path transform="translate(81.25 0)" d="M3.5 -19 V-2.5 L5.5 0 H8.5 M0 -12 H8"/></g>
<line x1="427.5" y1="129" x2="427.5" y2="220" stroke="#fff"/>
<line x1="427.5" y1="129" x2="427.5" y2="220" stroke="#30c030" stroke-dasharray="2 6"/>
<g transform="translate(451.3 221) rotate(-90) scale(0.88 1)" fill="none" stroke="#e08a40" stroke-width="1.05" stroke-linecap="square" stroke-linejoin="miter" shape-rendering="auto"><path transform="translate(0.00 0)" d="M0 0 V-19 H7 L10 -16 V-12.5 L7 -9.5 H0"/><path transform="translate(16.25 0)" d="M0.5 -9 L3.5 -12 H7.5 L10 -9.5 V0 M10 -6.5 H3 L0 -4 V-2 L2 0 H7.5 L10 -2.5"/><path transform="translate(32.50 0)" d="M10 -19 V0 M10 -3 L7.5 0 H3 L0 -3 V-9 L3 -12 H7.5 L10 -9"/><path transform="translate(48.75 0)" d="M1 -19 H9 M5 -19 V0 M1 0 H9"/><path transform="translate(65.00 0)" d="M0 -12 V0 M0 -9 L3 -12 H7 L10 -9 V0"/><path transform="translate(81.25 0)" d="M10 -16 L7.5 -19 H3 L0 -16 V-3 L3 0 H7.5 L10 -3"/></g>
<line x1="456.5" y1="129" x2="456.5" y2="220" stroke="#fff"/>
<line x1="456.5" y1="129" x2="456.5" y2="220" stroke="#30c030" stroke-dasharray="2 6"/>
<g transform="translate(480.3 221) rotate(-90) scale(0.88 1)" fill="none" stroke="#e08a40" stroke-width="1.05" stroke-linecap="square" stroke-linejoin="miter" shape-rendering="auto"><path transform="translate(0.00 0)" d="M0 0 V-19 H7 L10 -16 V-12.5 L7 -9.5 H0"/><path transform="translate(16.25 0)" d="M0.5 -9 L3.5 -12 H7.5 L10 -9.5 V0 M10 -6.5 H3 L0 -4 V-2 L2 0 H7.5 L10 -2.5"/><path transform="translate(32.50 0)" d="M10 -19 V0 M10 -3 L7.5 0 H3 L0 -3 V-9 L3 -12 H7.5 L10 -9"/><path transform="translate(48.75 0)" d="M10 -16 L7.5 -19 H3 L0 -16 V-3 L3 0 H7.5 L10 -3 V-8 H6"/><path transform="translate(65.00 0)" d="M0 -12 V0 M0 -9 L3 -12 H7 L10 -9 V0"/><path transform="translate(81.25 0)" d="M10 -19 V0 M10 -3 L7.5 0 H3 L0 -3 V-9 L3 -12 H7.5 L10 -9"/></g>
<rect x="190" y="129" width="296" height="1" fill="#40e040" />
</g>
<rect x="685" y="94" width="127" height="2" fill="#a8a8a8" />
<rect x="685" y="94" width="127" height="2" fill="url(#k)" />
<rect x="685" y="94" width="2" height="558" fill="#a8a8a8" />
<rect x="685" y="94" width="2" height="558" fill="url(#k)" />
<rect x="687" y="96" width="123" height="2" fill="url(#w)" />
<rect x="687" y="96" width="2" height="554" fill="url(#w)" />
<rect x="689" y="98" width="119" height="15" fill="#a8a8a8" />
<text x="716.3" y="109.7" font-size="12" font-weight="bold" fill="#000" stroke="#000" stroke-width="0.3" text-anchor="start" textLength="64" lengthAdjust="spacingAndGlyphs" >IC Palettes</text>
<rect x="689" y="113" width="1" height="1" fill="#000" />
<rect x="691" y="113" width="1" height="1" fill="#000" />
<rect x="693" y="113" width="1" height="1" fill="#000" />
<rect x="695" y="113" width="1" height="1" fill="#000" />
<rect x="697" y="113" width="1" height="1" fill="#000" />
<rect x="699" y="113" width="1" height="1" fill="#000" />
<rect x="701" y="113" width="1" height="1" fill="#000" />
<rect x="703" y="113" width="1" height="1" fill="#000" />
<rect x="705" y="113" width="1" height="1" fill="#000" />
<rect x="707" y="113" width="1" height="1" fill="#000" />
<rect x="709" y="113" width="1" height="1" fill="#000" />
<rect x="711" y="113" width="1" height="1" fill="#000" />
<rect x="713" y="113" width="1" height="1" fill="#000" />
<rect x="715" y="113" width="1" height="1" fill="#000" />
<rect x="717" y="113" width="1" height="1" fill="#000" />
<rect x="719" y="113" width="1" height="1" fill="#000" />
<rect x="721" y="113" width="1" height="1" fill="#000" />
<rect x="723" y="113" width="1" height="1" fill="#000" />
<rect x="725" y="113" width="1" height="1" fill="#000" />
<rect x="727" y="113" width="1" height="1" fill="#000" />
<rect x="729" y="113" width="1" height="1" fill="#000" />
<rect x="731" y="113" width="1" height="1" fill="#000" />
<rect x="733" y="113" width="1" height="1" fill="#000" />
<rect x="735" y="113" width="1" height="1" fill="#000" />
<rect x="737" y="113" width="1" height="1" fill="#000" />
<rect x="739" y="113" width="1" height="1" fill="#000" />
<rect x="741" y="113" width="1" height="1" fill="#000" />
<rect x="743" y="113" width="1" height="1" fill="#000" />
<rect x="745" y="113" width="1" height="1" fill="#000" />
<rect x="747" y="113" width="1" height="1" fill="#000" />
<rect x="749" y="113" width="1" height="1" fill="#000" />
<rect x="751" y="113" width="1" height="1" fill="#000" />
<rect x="753" y="113" width="1" height="1" fill="#000" />
<rect x="755" y="113" width="1" height="1" fill="#000" />
<rect x="757" y="113" width="1" height="1" fill="#000" />
<rect x="759" y="113" width="1" height="1" fill="#000" />
<rect x="761" y="113" width="1" height="1" fill="#000" />
<rect x="763" y="113" width="1" height="1" fill="#000" />
<rect x="765" y="113" width="1" height="1" fill="#000" />
<rect x="767" y="113" width="1" height="1" fill="#000" />
<rect x="769" y="113" width="1" height="1" fill="#000" />
<rect x="771" y="113" width="1" height="1" fill="#000" />
<rect x="773" y="113" width="1" height="1" fill="#000" />
<rect x="775" y="113" width="1" height="1" fill="#000" />
<rect x="777" y="113" width="1" height="1" fill="#000" />
<rect x="779" y="113" width="1" height="1" fill="#000" />
<rect x="781" y="113" width="1" height="1" fill="#000" />
<rect x="783" y="113" width="1" height="1" fill="#000" />
<rect x="785" y="113" width="1" height="1" fill="#000" />
<rect x="787" y="113" width="1" height="1" fill="#000" />
<rect x="789" y="113" width="1" height="1" fill="#000" />
<rect x="791" y="113" width="1" height="1" fill="#000" />
<rect x="793" y="113" width="1" height="1" fill="#000" />
<rect x="795" y="113" width="1" height="1" fill="#000" />
<rect x="797" y="113" width="1" height="1" fill="#000" />
<rect x="799" y="113" width="1" height="1" fill="#000" />
<rect x="801" y="113" width="1" height="1" fill="#000" />
<rect x="803" y="113" width="1" height="1" fill="#000" />
<rect x="805" y="113" width="1" height="1" fill="#000" />
<rect x="807" y="113" width="1" height="1" fill="#000" />
<rect x="689" y="114" width="119" height="1" fill="#fff" />
<rect x="689" y="115" width="120" height="534" fill="#c0d8d8" />
<rect x="808" y="96" width="2" height="554" fill="url(#k)" />
<rect x="687" y="649" width="123" height="2" fill="url(#k)" />
<rect x="810" y="94" width="2" height="558" fill="url(#w)" />
<rect x="685" y="650" width="127" height="2" fill="url(#w)" />
<text x="742" y="136.8" font-size="12" font-weight="bold" fill="#000" stroke="#000" stroke-width="0.3" text-anchor="middle" letter-spacing="0.25">Easy Edit</text>
<text x="742" y="158.8" font-size="12" font-weight="bold" fill="#000" stroke="#000" stroke-width="0.3" text-anchor="middle" letter-spacing="0.25">Edit</text>
<text x="742" y="180.8" font-size="12" font-weight="bold" fill="#000" stroke="#000" stroke-width="0.3" text-anchor="middle" letter-spacing="0.25">Expert Edit</text>
<text x="742" y="202.8" font-size="12" font-weight="bold" fill="#000" stroke="#000" stroke-width="0.3" text-anchor="middle" letter-spacing="0.25">CE/CBC Edit</text>
<text x="742" y="224.8" font-size="12" font-weight="bold" fill="#000" stroke="#000" stroke-width="0.3" text-anchor="middle" letter-spacing="0.25">DLA Layout</text>
<text x="742" y="246.8" font-size="12" font-weight="bold" fill="#000" stroke="#000" stroke-width="0.3" text-anchor="middle" letter-spacing="0.25">DLA Device</text>
<text x="742" y="268.8" font-size="12" font-weight="bold" fill="#000" stroke="#000" stroke-width="0.3" text-anchor="middle" letter-spacing="0.25">CDL</text>
<text x="742" y="290.8" font-size="12" font-weight="bold" fill="#000" stroke="#000" stroke-width="0.3" text-anchor="middle" letter-spacing="0.25">ECO</text>
<text x="742" y="312.8" font-size="12" font-weight="bold" fill="#000" stroke="#000" stroke-width="0.3" text-anchor="middle" letter-spacing="0.25">IC Session</text>
<rect x="694" y="323" width="96" height="1" fill="#000" />
<text x="742" y="341.3" font-size="12" font-weight="bold" fill="#000" stroke="#000" stroke-width="0.3" text-anchor="middle" letter-spacing="0.25">ICrules</text>
<text x="742" y="363.3" font-size="12" font-weight="bold" fill="#000" stroke="#000" stroke-width="0.3" text-anchor="middle" letter-spacing="0.25">Short Checker</text>
<text x="742" y="385.3" font-size="12" font-weight="bold" fill="#000" stroke="#000" stroke-width="0.3" text-anchor="middle" letter-spacing="0.25">ICtrace (D)</text>
<text x="742" y="407.3" font-size="12" font-weight="bold" fill="#000" stroke="#000" stroke-width="0.3" text-anchor="middle" letter-spacing="0.25">ICtrace (M)</text>
<text x="742" y="429.3" font-size="12" font-weight="bold" fill="#000" stroke="#000" stroke-width="0.3" text-anchor="middle" letter-spacing="0.25">ICextract (D)</text>
<text x="742" y="451.3" font-size="12" font-weight="bold" fill="#000" stroke="#000" stroke-width="0.3" text-anchor="middle" letter-spacing="0.25">ICextract (M)</text>
<text x="742" y="473.3" font-size="12" font-weight="bold" fill="#000" stroke="#000" stroke-width="0.3" text-anchor="middle" letter-spacing="0.25">Verifdp (DRC)</text>
<text x="742" y="495.3" font-size="12" font-weight="bold" fill="#000" stroke="#000" stroke-width="0.3" text-anchor="middle" letter-spacing="0.25">Verifdp (LVS)</text>
<text x="742" y="517.3" font-size="12" font-weight="bold" fill="#000" stroke="#000" stroke-width="0.3" text-anchor="middle" letter-spacing="0.25">Floorplan</text>
<text x="742" y="539.3" font-size="12" font-weight="bold" fill="#000" stroke="#000" stroke-width="0.3" text-anchor="middle" letter-spacing="0.25">Place &amp; Route</text>
<rect x="694" y="550" width="96" height="1" fill="#000" />
<text x="742" y="568.4" font-size="12" font-weight="bold" fill="#30a030" stroke="#30a030" stroke-width="0.3" text-anchor="middle" letter-spacing="0.25">ADK Edit</text>
<rect x="733" y="571" width="10" height="1" fill="#30a030" />
<rect x="12" y="219" width="660" height="430" fill="#000" />
<rect x="13" y="220" width="658" height="428" fill="#fff" />
<rect x="14" y="221" width="656" height="426" fill="#d8d8c0" />
<rect x="26" y="233" width="644" height="1" fill="#000" />
<rect x="27" y="234" width="643" height="1" fill="#fff" />
<rect x="26" y="233" width="1" height="401" fill="#000" />
<rect x="27" y="234" width="1" height="399" fill="#fff" />
<rect x="26" y="633" width="644" height="1" fill="#000" />
<rect x="26" y="634" width="644" height="1" fill="#fff" />
<text x="47.5" y="255.5" font-size="12" font-weight="bold" fill="#000" stroke="#000" stroke-width="0.3" text-anchor="start" textLength="136.5" lengthAdjust="spacingAndGlyphs" >Choose one layer name</text>
<rect x="44" y="266" width="310" height="2" fill="url(#k)" />
<rect x="44" y="266" width="2" height="229" fill="url(#k)" />
<rect x="44" y="493" width="310" height="2" fill="url(#w)" />
<rect x="352" y="266" width="2" height="229" fill="url(#w)" />
<rect x="56" y="268" width="31" height="225" fill="#000" />
<rect x="46" y="358" width="289" height="16" fill="#000" />
<text x="101.8" y="278.5" font-size="12.5" font-weight="normal" fill="#000" text-anchor="start" textLength="14.5" lengthAdjust="spacingAndGlyphs" >43</text>
<text x="141.6" y="278.5" font-size="12.5" font-weight="normal" fill="#000" text-anchor="start" textLength="53" lengthAdjust="spacingAndGlyphs" >ACTIVE</text>
<text x="101.8" y="293.5" font-size="12.5" font-weight="normal" fill="#000" text-anchor="start" textLength="14.5" lengthAdjust="spacingAndGlyphs" >44</text>
<text x="141.6" y="293.5" font-size="12.5" font-weight="normal" fill="#000" text-anchor="start" textLength="112.5" lengthAdjust="spacingAndGlyphs" >P_PLUS_SELECT</text>
<text x="101.8" y="308.5" font-size="12.5" font-weight="normal" fill="#000" text-anchor="start" textLength="14.5" lengthAdjust="spacingAndGlyphs" >45</text>
<text x="141.6" y="308.5" font-size="12.5" font-weight="normal" fill="#000" text-anchor="start" textLength="114.7" lengthAdjust="spacingAndGlyphs" >N_PLUS_SELECT</text>
<text x="101.8" y="323.5" font-size="12.5" font-weight="normal" fill="#000" text-anchor="start" textLength="14.5" lengthAdjust="spacingAndGlyphs" >46</text>
<text x="141.6" y="323.5" font-size="12.5" font-weight="normal" fill="#000" text-anchor="start" textLength="35" lengthAdjust="spacingAndGlyphs" >POLY</text>
<text x="101.8" y="338.5" font-size="12.5" font-weight="normal" fill="#000" text-anchor="start" textLength="14.5" lengthAdjust="spacingAndGlyphs" >47</text>
<text x="141.6" y="338.5" font-size="12.5" font-weight="normal" fill="#000" text-anchor="start" textLength="141.5" lengthAdjust="spacingAndGlyphs" >CONTACT_TO_POLY</text>
<text x="101.8" y="353.5" font-size="12.5" font-weight="normal" fill="#000" text-anchor="start" textLength="14.5" lengthAdjust="spacingAndGlyphs" >48</text>
<text x="141.6" y="353.5" font-size="12.5" font-weight="normal" fill="#000" text-anchor="start" textLength="158.4" lengthAdjust="spacingAndGlyphs" >CONTACT_TO_ACTIVE</text>
<text x="101.8" y="368.5" font-size="12.5" font-weight="normal" fill="#fff" text-anchor="start" textLength="14.5" lengthAdjust="spacingAndGlyphs" >49</text>
<text x="141.6" y="368.5" font-size="12.5" font-weight="normal" fill="#fff" text-anchor="start" textLength="55.3" lengthAdjust="spacingAndGlyphs" >METAL1</text>
<text x="101.8" y="383.5" font-size="12.5" font-weight="normal" fill="#000" text-anchor="start" textLength="14.5" lengthAdjust="spacingAndGlyphs" >50</text>
<text x="141.6" y="383.5" font-size="12.5" font-weight="normal" fill="#000" text-anchor="start" textLength="25.4" lengthAdjust="spacingAndGlyphs" >VIA</text>
<text x="101.8" y="398.5" font-size="12.5" font-weight="normal" fill="#000" text-anchor="start" textLength="14.5" lengthAdjust="spacingAndGlyphs" >51</text>
<text x="141.6" y="398.5" font-size="12.5" font-weight="normal" fill="#000" text-anchor="start" textLength="56.2" lengthAdjust="spacingAndGlyphs" >METAL2</text>
<text x="101.8" y="413.5" font-size="12.5" font-weight="normal" fill="#000" text-anchor="start" textLength="14.5" lengthAdjust="spacingAndGlyphs" >52</text>
<text x="141.6" y="413.5" font-size="12.5" font-weight="normal" fill="#000" text-anchor="start" textLength="87" lengthAdjust="spacingAndGlyphs" >OVERGLASS</text>
<text x="101.8" y="428.5" font-size="12.5" font-weight="normal" fill="#000" text-anchor="start" textLength="14.5" lengthAdjust="spacingAndGlyphs" >55</text>
<text x="141.6" y="428.5" font-size="12.5" font-weight="normal" fill="#000" text-anchor="start" textLength="188.6" lengthAdjust="spacingAndGlyphs" >CONTACT_TO_ELECTRODE</text>
<text x="101.8" y="443.5" font-size="12.5" font-weight="normal" fill="#000" text-anchor="start" textLength="14.5" lengthAdjust="spacingAndGlyphs" >56</text>
<text x="141.6" y="443.5" font-size="12.5" font-weight="normal" fill="#000" text-anchor="start" textLength="82" lengthAdjust="spacingAndGlyphs" >ELECTRODE</text>
<text x="101.8" y="458.5" font-size="12.5" font-weight="normal" fill="#000" text-anchor="start" textLength="14.5" lengthAdjust="spacingAndGlyphs" >57</text>
<text x="141.6" y="458.5" font-size="12.5" font-weight="normal" fill="#000" text-anchor="start" textLength="88.4" lengthAdjust="spacingAndGlyphs" >BURIED_CCD</text>
<text x="101.8" y="473.5" font-size="12.5" font-weight="normal" fill="#000" text-anchor="start" textLength="14.5" lengthAdjust="spacingAndGlyphs" >58</text>
<text x="141.6" y="473.5" font-size="12.5" font-weight="normal" fill="#000" text-anchor="start" textLength="45" lengthAdjust="spacingAndGlyphs" >PBASE</text>
<text x="101.8" y="488.5" font-size="12.5" font-weight="normal" fill="#000" text-anchor="start" textLength="14.5" lengthAdjust="spacingAndGlyphs" >59</text>
<text x="141.6" y="488.5" font-size="12.5" font-weight="normal" fill="#000" text-anchor="start" textLength="76.2" lengthAdjust="spacingAndGlyphs" >CAP_WELL</text>
<rect x="59" y="271" width="25" height="10" fill="#18f018" />
<rect x="61" y="273" width="21" height="6" fill="#18f018" />
<rect x="62" y="274" width="19" height="4" fill="#18f018" />
<rect x="62" y="274" width="19" height="4" fill="url(#k)" />
<rect x="59" y="286" width="25" height="10" fill="#ffff20" />
<rect x="62" y="289" width="19" height="4" fill="#000" />
<rect x="59" y="301" width="25" height="10" fill="#80f820" />
<rect x="62" y="304" width="19" height="4" fill="#000" />
<rect x="59" y="316" width="25" height="10" fill="#e01010" />
<rect x="59" y="316" width="25" height="10" fill="url(#k)" />
<rect x="59" y="331" width="25" height="10" fill="#fff" />
<rect x="61" y="333" width="21" height="6" fill="#fff" />
<rect x="62" y="334" width="19" height="4" fill="#f01010" />
<rect x="59" y="346" width="25" height="10" fill="#fff" />
<rect x="61" y="348" width="21" height="6" fill="#fff" />
<rect x="62" y="349" width="19" height="4" fill="#18f018" />
<rect x="59" y="361" width="25" height="10" fill="#1010e0" />
<rect x="61" y="363" width="21" height="6" fill="#0000a0" />
<path d="M62 369 L68 363 M70 369 L76 363 M78 369 L83 364" stroke="#4040f0" stroke-width="1" shape-rendering="auto"/>
<rect x="59" y="376" width="25" height="10" fill="#fff" />
<rect x="61" y="378" width="21" height="6" fill="#fff" />
<rect x="62" y="379" width="19" height="4" fill="#1010e0" />
<rect x="59" y="391" width="25" height="10" fill="#9050c8" />
<rect x="61" y="393" width="21" height="6" fill="#000" />
<path d="M61 393 L67 399 M69 393 L75 399 M77 393 L83 399" stroke="#9050c8" stroke-width="1" shape-rendering="auto"/>
<rect x="59" y="406" width="25" height="10" fill="#fff" />
<rect x="60" y="407" width="23" height="8" fill="#000" />
<rect x="62" y="407" width="1" height="2" fill="#fff" />
<rect x="65" y="412" width="1" height="2" fill="#fff" />
<rect x="70" y="407" width="1" height="2" fill="#fff" />
<rect x="73" y="412" width="1" height="2" fill="#fff" />
<rect x="78" y="407" width="1" height="2" fill="#fff" />
<rect x="81" y="412" width="1" height="2" fill="#fff" />
<rect x="81" y="411" width="2" height="2" fill="#fff" />
<rect x="59" y="421" width="25" height="10" fill="#60a0a0" />
<rect x="59" y="436" width="25" height="10" fill="#c8c8f8" />
<rect x="60" y="437" width="23" height="8" fill="#000" />
<path d="M60 437 L67 445 M68 437 L75 445 M76 437 L83 445" stroke="#c8c8f8" stroke-width="1" shape-rendering="auto"/>
<rect x="59" y="451" width="25" height="10" fill="#fff" />
<rect x="60" y="452" width="23" height="8" fill="#000" />
<rect x="59" y="466" width="25" height="10" fill="#fff" />
<rect x="60" y="467" width="23" height="8" fill="#000" />
<rect x="59" y="481" width="25" height="10" fill="#fff" />
<rect x="60" y="482" width="23" height="8" fill="#000" />
<rect x="336" y="268" width="2" height="225" fill="url(#k)" />
<rect x="350" y="268" width="2" height="225" fill="url(#w)" />
<path d="M343.5 272 L338.5 282 L349 282 Z" fill="none" stroke="#000" stroke-width="1.6" shape-rendering="auto"/>
<path d="M343.5 272 L338.5 282" stroke="#fff" stroke-width="1.6" shape-rendering="auto"/>
<rect x="338" y="315" width="11" height="2" fill="url(#w)" />
<rect x="338" y="315" width="2" height="20" fill="url(#w)" />
<rect x="338" y="333" width="11" height="2" fill="url(#k)" />
<rect x="347" y="315" width="2" height="20" fill="url(#k)" />
<path d="M343.5 491 L338.5 481 L349 481" fill="none" stroke="#fff" stroke-width="1.4" shape-rendering="auto"/>
<path d="M349 481 L343.5 491" stroke="#000" stroke-width="1.6" shape-rendering="auto"/>
<ellipse cx="127" cy="367" rx="82" ry="15" fill="none" stroke="#c83030" stroke-width="1.05" shape-rendering="auto"/>
<rect x="39" y="502" width="328" height="1" fill="#000" />
<rect x="39" y="503" width="328" height="1" fill="#fff" />
<text x="82.5" y="525.4" font-size="12" font-weight="bold" fill="#000" stroke="#000" stroke-width="0.3" text-anchor="start" textLength="63" lengthAdjust="spacingAndGlyphs" >Or Type In</text>
<rect x="151" y="510" width="172" height="20" fill="#fff" />
<rect x="151" y="510" width="172" height="2" fill="url(#k)" />
<rect x="151" y="510" width="2" height="20" fill="url(#k)" />
<rect x="151" y="528" width="172" height="2" fill="#fff" />
<rect x="151" y="528" width="172" height="2" fill="url(#w)" />
<text x="156" y="524" font-size="14" font-weight="normal" fill="#000" text-anchor="start" textLength="55" lengthAdjust="spacingAndGlyphs" >METAL1</text>
<rect x="367" y="246" width="1" height="296" fill="#000" />
<rect x="368" y="246" width="1" height="296" fill="#fff" />
<rect x="522" y="246" width="1" height="296" fill="#000" />
<rect x="523" y="246" width="1" height="296" fill="#fff" />
<text x="375" y="268.5" font-size="12" font-weight="bold" fill="#000" stroke="#000" stroke-width="0.3" text-anchor="start" textLength="31" lengthAdjust="spacingAndGlyphs" >Width</text>
<rect x="412" y="255" width="104" height="21" fill="#fff" />
<rect x="412" y="255" width="104" height="2" fill="url(#k)" />
<rect x="412" y="255" width="2" height="21" fill="url(#k)" />
<rect x="412" y="274" width="104" height="2" fill="#fff" />
<rect x="412" y="274" width="104" height="2" fill="url(#w)" />
<rect x="514" y="255" width="2" height="21" fill="#fff" />
<rect x="514" y="255" width="2" height="21" fill="url(#w)" />
<rect x="412" y="274" width="104" height="2" fill="#d8d8c0" />
<rect x="412" y="274" width="104" height="2" fill="url(#w)" />
<rect x="514" y="257" width="2" height="19" fill="#d8d8c0" />
<rect x="514" y="257" width="2" height="19" fill="url(#w)" />
<text x="418" y="268.5" font-size="14" font-weight="normal" fill="#000" text-anchor="start" textLength="15" lengthAdjust="spacingAndGlyphs" >50</text>
<ellipse cx="418.5" cy="265" rx="52" ry="23.5" fill="none" stroke="#c83030" stroke-width="1.05" shape-rendering="auto"/>
<rect x="369" y="288" width="153" height="1" fill="#000" />
<rect x="369" y="289" width="153" height="1" fill="#fff" />
<rect x="369" y="410" width="153" height="1" fill="#000" />
<rect x="369" y="411" width="153" height="1" fill="#fff" />
<rect x="524" y="372" width="133" height="1" fill="#000" />
<rect x="524" y="373" width="133" height="1" fill="#fff" />
<rect x="39" y="543" width="624" height="1" fill="#000" />
<rect x="39" y="544" width="624" height="1" fill="#fff" />
<text x="410.3" y="313.9" font-size="12" font-weight="bold" fill="#000" stroke="#000" stroke-width="0.3" text-anchor="start" >Aspect</text>
<path d="M411.0 332.4 L419.5 323.9 L428.0 332.4" fill="none" stroke="#000" stroke-width="1.8" shape-rendering="auto"/>
<path d="M411.0 332.4 L419.5 340.9 L428.0 332.4" fill="none" stroke="#fff" stroke-width="1.8" shape-rendering="auto"/>
<path d="M414.5 332.4 L419.5 327.4 L424.5 332.4 L419.5 337.4 Z" fill="#000" shape-rendering="auto"/>
<text x="433.5" y="335.9" font-size="12" font-weight="bold" fill="#000" stroke="#000" stroke-width="0.3" text-anchor="start" >Internal</text>
<path d="M411.0 357.2 L419.5 348.7 L428.0 357.2" fill="none" stroke="#fff" stroke-width="1.8" shape-rendering="auto"/>
<path d="M411.0 357.2 L419.5 365.7 L428.0 357.2" fill="none" stroke="#000" stroke-width="1.8" shape-rendering="auto"/>
<text x="433.5" y="360.7" font-size="12" font-weight="bold" fill="#000" stroke="#000" stroke-width="0.3" text-anchor="start" >External</text>
<path d="M411.0 382.2 L419.5 373.7 L428.0 382.2" fill="none" stroke="#fff" stroke-width="1.8" shape-rendering="auto"/>
<path d="M411.0 382.2 L419.5 390.7 L428.0 382.2" fill="none" stroke="#000" stroke-width="1.8" shape-rendering="auto"/>
<text x="433.5" y="385.7" font-size="12" font-weight="bold" fill="#000" stroke="#000" stroke-width="0.3" text-anchor="start" >Both</text>
<text x="393.9" y="436" font-size="12" font-weight="bold" fill="#000" stroke="#000" stroke-width="0.3" text-anchor="start" >Padding</text>
<path d="M397.7 454.5 L406.2 446.0 L414.7 454.5" fill="none" stroke="#000" stroke-width="1.8" shape-rendering="auto"/>
<path d="M397.7 454.5 L406.2 463.0 L414.7 454.5" fill="none" stroke="#fff" stroke-width="1.8" shape-rendering="auto"/>
<path d="M401.2 454.5 L406.2 449.5 L411.2 454.5 L406.2 459.5 Z" fill="#000" shape-rendering="auto"/>
<text x="421" y="458" font-size="12" font-weight="bold" fill="#000" stroke="#000" stroke-width="0.3" text-anchor="start" >No Padding</text>
<path d="M397.7 479.7 L406.2 471.2 L414.7 479.7" fill="none" stroke="#fff" stroke-width="1.8" shape-rendering="auto"/>
<path d="M397.7 479.7 L406.2 488.2 L414.7 479.7" fill="none" stroke="#000" stroke-width="1.8" shape-rendering="auto"/>
<text x="421" y="483.2" font-size="12" font-weight="bold" fill="#000" stroke="#000" stroke-width="0.3" text-anchor="start" >Grid Padding</text>
<path d="M397.7 504.3 L406.2 495.8 L414.7 504.3" fill="none" stroke="#fff" stroke-width="1.8" shape-rendering="auto"/>
<path d="M397.7 504.3 L406.2 512.8 L414.7 504.3" fill="none" stroke="#000" stroke-width="1.8" shape-rendering="auto"/>
<text x="421" y="507.8" font-size="12" font-weight="bold" fill="#000" stroke="#000" stroke-width="0.3" text-anchor="start" >Padded</text>
<text x="550.7" y="272.6" font-size="12" font-weight="bold" fill="#000" stroke="#000" stroke-width="0.3" text-anchor="start" >Path Style</text>
<path d="M554.8 291.2 L563.3 282.7 L571.8 291.2" fill="none" stroke="#fff" stroke-width="1.8" shape-rendering="auto"/>
<path d="M554.8 291.2 L563.3 299.7 L571.8 291.2" fill="none" stroke="#000" stroke-width="1.8" shape-rendering="auto"/>
<text x="577.6" y="294.7" font-size="12" font-weight="bold" fill="#000" stroke="#000" stroke-width="0.3" text-anchor="start" >Left</text>
<path d="M554.8 315.3 L563.3 306.8 L571.8 315.3" fill="none" stroke="#000" stroke-width="1.8" shape-rendering="auto"/>
<path d="M554.8 315.3 L563.3 323.8 L571.8 315.3" fill="none" stroke="#fff" stroke-width="1.8" shape-rendering="auto"/>
<path d="M558.3 315.3 L563.3 310.3 L568.3 315.3 L563.3 320.3 Z" fill="#000" shape-rendering="auto"/>
<text x="577.6" y="318.8" font-size="12" font-weight="bold" fill="#000" stroke="#000" stroke-width="0.3" text-anchor="start" >Center</text>
<path d="M554.8 339.5 L563.3 331.0 L571.8 339.5" fill="none" stroke="#fff" stroke-width="1.8" shape-rendering="auto"/>
<path d="M554.8 339.5 L563.3 348.0 L571.8 339.5" fill="none" stroke="#000" stroke-width="1.8" shape-rendering="auto"/>
<text x="577.6" y="343" font-size="12" font-weight="bold" fill="#000" stroke="#000" stroke-width="0.3" text-anchor="start" >Right</text>
<text x="533.4" y="406" font-size="12" font-weight="bold" fill="#000" stroke="#000" stroke-width="0.3" text-anchor="start" >Endstyle</text>
<path d="M538.0 424.2 L546.5 415.7 L555.0 424.2" fill="none" stroke="#000" stroke-width="1.8" shape-rendering="auto"/>
<path d="M538.0 424.2 L546.5 432.7 L555.0 424.2" fill="none" stroke="#fff" stroke-width="1.8" shape-rendering="auto"/>
<path d="M541.5 424.2 L546.5 419.2 L551.5 424.2 L546.5 429.2 Z" fill="#000" shape-rendering="auto"/>
<text x="560.5" y="427.7" font-size="12" font-weight="bold" fill="#000" stroke="#000" stroke-width="0.3" text-anchor="start" >Normal</text>
<path d="M538.0 448.1 L546.5 439.6 L555.0 448.1" fill="none" stroke="#fff" stroke-width="1.8" shape-rendering="auto"/>
<path d="M538.0 448.1 L546.5 456.6 L555.0 448.1" fill="none" stroke="#000" stroke-width="1.8" shape-rendering="auto"/>
<text x="560.5" y="451.6" font-size="12" font-weight="bold" fill="#000" stroke="#000" stroke-width="0.3" text-anchor="start" >Extended</text>
<path d="M538.0 471.9 L546.5 463.4 L555.0 471.9" fill="none" stroke="#fff" stroke-width="1.8" shape-rendering="auto"/>
<path d="M538.0 471.9 L546.5 480.4 L555.0 471.9" fill="none" stroke="#000" stroke-width="1.8" shape-rendering="auto"/>
<text x="560.5" y="475.4" font-size="12" font-weight="bold" fill="#000" stroke="#000" stroke-width="0.3" text-anchor="start" >First Extended</text>
<path d="M538.0 495.8 L546.5 487.3 L555.0 495.8" fill="none" stroke="#fff" stroke-width="1.8" shape-rendering="auto"/>
<path d="M538.0 495.8 L546.5 504.3 L555.0 495.8" fill="none" stroke="#000" stroke-width="1.8" shape-rendering="auto"/>
<text x="560.5" y="499.3" font-size="12" font-weight="bold" fill="#000" stroke="#000" stroke-width="0.3" text-anchor="start" >Last Extended</text>
<rect x="278" y="552" width="17" height="2" fill="url(#w)" />
<rect x="278" y="552" width="2" height="17" fill="url(#w)" />
<rect x="278" y="567" width="17" height="2" fill="url(#k)" />
<rect x="293" y="552" width="2" height="17" fill="url(#k)" />
<text x="299.8" y="563.7" font-size="12" font-weight="bold" fill="#000" stroke="#000" stroke-width="0.3" text-anchor="start" textLength="125" lengthAdjust="spacingAndGlyphs" >Keep Option Settings</text>
<rect x="39" y="575" width="624" height="1" fill="#000" />
<rect x="39" y="576" width="624" height="1" fill="#fff" />
<rect x="235" y="582" width="66" height="1" fill="url(#k)" />
<rect x="235" y="582" width="1" height="30" fill="url(#k)" />
<rect x="235" y="611" width="66" height="1" fill="url(#w)" />
<rect x="300" y="582" width="1" height="30" fill="url(#w)" />
<rect x="239" y="587" width="59" height="2" fill="url(#w)" />
<rect x="239" y="587" width="2" height="21" fill="url(#w)" />
<rect x="239" y="606" width="59" height="2" fill="url(#k)" />
<rect x="296" y="587" width="2" height="21" fill="url(#k)" />
<text x="259" y="600.6" font-size="12" font-weight="bold" fill="#000" stroke="#000" stroke-width="0.3" text-anchor="start" textLength="18" lengthAdjust="spacingAndGlyphs" >OK</text>
<rect x="319" y="587" width="58" height="2" fill="url(#w)" />
<rect x="319" y="587" width="2" height="21" fill="url(#w)" />
<rect x="319" y="606" width="58" height="2" fill="url(#k)" />
<rect x="375" y="587" width="2" height="21" fill="url(#k)" />
<text x="330.2" y="601" font-size="12" font-weight="bold" fill="#000" stroke="#000" stroke-width="0.3" text-anchor="start" textLength="34.5" lengthAdjust="spacingAndGlyphs" >Reset</text>
<rect x="399" y="587" width="58" height="2" fill="url(#w)" />
<rect x="399" y="587" width="2" height="21" fill="url(#w)" />
<rect x="399" y="606" width="58" height="2" fill="url(#k)" />
<rect x="455" y="587" width="2" height="21" fill="url(#k)" />
<text x="408.6" y="601" font-size="12" font-weight="bold" fill="#000" stroke="#000" stroke-width="0.3" text-anchor="start" textLength="37.5" lengthAdjust="spacingAndGlyphs" >Cancel</text>
<rect x="230.5" y="578.5" width="75" height="38" fill="none" stroke="#c83030" stroke-width="1.05"/>
<ellipse cx="264" cy="594.2" rx="37.5" ry="23.7" fill="none" stroke="#c83030" stroke-width="1.05" shape-rendering="auto"/>
<rect x="672" y="226" width="7" height="431" fill="#78d4d4" />
<rect x="672" y="226" width="7" height="431" fill="url(#k)" />
<rect x="12" y="649" width="667" height="8" fill="#78d4d4" />
<rect x="12" y="649" width="667" height="8" fill="url(#k)" />
<rect x="682" y="652" width="134" height="5" fill="#a8a8a8" />
<rect x="12" y="657" width="804" height="57" fill="#a8a8a8" />
<rect x="12" y="657" width="804" height="1" fill="url(#k)" />
<rect x="14.5" y="658.5" width="63" height="55" fill="#a8a8a8" stroke="#000" stroke-width="1"/>
<g clip-path="url(#fk0)">
<text x="46.0" y="666.5" font-size="11" font-weight="normal" fill="#000" text-anchor="middle" >F1</text>
<text x="46.0" y="677.8" font-size="10.6" fill="#000" text-anchor="middle">Select Area</text>
<text x="46.0" y="688.8" font-size="10.6" fill="#000" text-anchor="middle">Add Path</text>
</g>
<rect x="79.5" y="658.5" width="64" height="55" fill="#a8a8a8" stroke="#000" stroke-width="1"/>
<g clip-path="url(#fk1)">
<text x="111.5" y="666.5" font-size="11" font-weight="normal" fill="#000" text-anchor="middle" >F2</text>
<text x="111.5" y="677.8" font-size="10.6" fill="#000" text-anchor="middle">Unselect All</text>
</g>
<rect x="145.5" y="658.5" width="64" height="55" fill="#a8a8a8" stroke="#000" stroke-width="1"/>
<g clip-path="url(#fk2)">
<text x="177.5" y="666.5" font-size="11" font-weight="normal" fill="#000" text-anchor="middle" >F3</text>
<text x="177.5" y="677.8" font-size="10.6" fill="#000" text-anchor="middle">Cycle Selected</text>
</g>
<rect x="211.5" y="658.5" width="64" height="55" fill="#a8a8a8" stroke="#000" stroke-width="1"/>
<g clip-path="url(#fk3)">
<text x="243.5" y="666.5" font-size="11" font-weight="normal" fill="#000" text-anchor="middle" >F4</text>
<text x="243.5" y="677.8" font-size="10.6" fill="#000" text-anchor="middle">Popup Menu</text>
</g>
<rect x="277.5" y="658.5" width="64" height="55" fill="#a8a8a8" stroke="#000" stroke-width="1"/>
<g clip-path="url(#fk4)">
<text x="309.5" y="666.5" font-size="11" font-weight="normal" fill="#000" text-anchor="middle" >F5</text>
<text x="309.5" y="677.8" font-size="10.6" fill="#000" text-anchor="middle">Add Cell</text>
<text x="309.5" y="699.8" font-size="10.6" fill="#000" text-anchor="middle">Rotate -90</text>
</g>
<rect x="343.5" y="658.5" width="64" height="55" fill="#a8a8a8" stroke="#000" stroke-width="1"/>
<g clip-path="url(#fk5)">
<text x="375.5" y="666.5" font-size="11" font-weight="normal" fill="#000" text-anchor="middle" >F6</text>
<text x="375.5" y="677.8" font-size="10.6" fill="#000" text-anchor="middle">Peek Area 1</text>
<text x="375.5" y="688.8" font-size="10.6" fill="#000" text-anchor="middle">Unpeek Area</text>
<text x="375.5" y="699.8" font-size="10.6" fill="#000" text-anchor="middle">Peek 1</text>
</g>
<rect x="421.5" y="658.5" width="63" height="55" fill="#a8a8a8" stroke="#000" stroke-width="1"/>
<g clip-path="url(#fk6)">
<text x="453.0" y="666.5" font-size="11" font-weight="normal" fill="#000" text-anchor="middle" >F7</text>
<text x="453.0" y="677.8" font-size="10.6" fill="#000" text-anchor="middle">Sel/Move Text</text>
<text x="453.0" y="688.8" font-size="10.6" fill="#000" text-anchor="middle">Sel/Change Text</text>
<text x="453.0" y="699.8" font-size="10.6" fill="#000" text-anchor="middle">Activate Port</text>
</g>
<rect x="486.5" y="658.5" width="64" height="55" fill="#a8a8a8" stroke="#000" stroke-width="1"/>
<g clip-path="url(#fk7)">
<text x="518.5" y="666.5" font-size="11" font-weight="normal" fill="#000" text-anchor="middle" >F8</text>
<text x="518.5" y="677.8" font-size="10.6" fill="#000" text-anchor="middle">View Area</text>
<text x="518.5" y="688.8" font-size="10.6" fill="#000" text-anchor="middle">View All</text>
<text x="518.5" y="699.8" font-size="10.6" fill="#000" text-anchor="middle">Activate Net</text>
</g>
<rect x="552.5" y="658.5" width="64" height="55" fill="#a8a8a8" stroke="#000" stroke-width="1"/>
<g clip-path="url(#fk8)">
<text x="584.5" y="666.5" font-size="11" font-weight="normal" fill="#000" text-anchor="middle" >F9</text>
<text x="584.5" y="677.8" font-size="10.6" fill="#000" text-anchor="middle">Set Location Mode</text>
<text x="584.5" y="688.8" font-size="10.6" fill="#000" text-anchor="middle">Toggle Autonotch</text>
<text x="584.5" y="699.8" font-size="10.6" fill="#000" text-anchor="middle">Get Outline</text>
</g>
<rect x="618.5" y="658.5" width="64" height="55" fill="#a8a8a8" stroke="#000" stroke-width="1"/>
<g clip-path="url(#fk9)">
<text x="650.5" y="666.5" font-size="11" font-weight="normal" fill="#000" text-anchor="middle" >F10</text>
<text x="650.5" y="677.8" font-size="10.6" fill="#000" text-anchor="middle">Pulldown Menu</text>
<text x="650.5" y="688.8" font-size="10.6" fill="#000" text-anchor="middle">Set IC Layer</text>
<text x="650.5" y="699.8" font-size="10.6" fill="#000" text-anchor="middle">Browse for File</text>
</g>
<rect x="685.5" y="658.5" width="63" height="55" fill="#a8a8a8" stroke="#000" stroke-width="1"/>
<g clip-path="url(#fk10)">
<text x="717.0" y="666.5" font-size="11" font-weight="normal" fill="#000" text-anchor="middle" >F11</text>
<text x="717.0" y="677.8" font-size="10.6" fill="#000" text-anchor="middle">Read File</text>
<text x="717.0" y="688.8" font-size="10.6" fill="#000" text-anchor="middle">Edit File</text>
<text x="717.0" y="699.8" font-size="10.6" fill="#000" text-anchor="middle">Save Cell</text>
</g>
<rect x="751.5" y="658.5" width="63" height="55" fill="#a8a8a8" stroke="#000" stroke-width="1"/>
<g clip-path="url(#fk11)">
<text x="783.0" y="666.5" font-size="11" font-weight="normal" fill="#000" text-anchor="middle" >F12</text>
<text x="783.0" y="677.8" font-size="10.6" fill="#000" text-anchor="middle">Pop Window</text>
<text x="783.0" y="688.8" font-size="10.6" fill="#000" text-anchor="middle">Close Window</text>
</g>
<defs><clipPath id="fk0"><rect x="15" y="659" width="62" height="54"/></clipPath><clipPath id="fk1"><rect x="80" y="659" width="63" height="54"/></clipPath><clipPath id="fk2"><rect x="146" y="659" width="63" height="54"/></clipPath><clipPath id="fk3"><rect x="212" y="659" width="63" height="54"/></clipPath><clipPath id="fk4"><rect x="278" y="659" width="63" height="54"/></clipPath><clipPath id="fk5"><rect x="344" y="659" width="63" height="54"/></clipPath><clipPath id="fk6"><rect x="422" y="659" width="62" height="54"/></clipPath><clipPath id="fk7"><rect x="487" y="659" width="63" height="54"/></clipPath><clipPath id="fk8"><rect x="553" y="659" width="63" height="54"/></clipPath><clipPath id="fk9"><rect x="619" y="659" width="63" height="54"/></clipPath><clipPath id="fk10"><rect x="686" y="659" width="62" height="54"/></clipPath><clipPath id="fk11"><rect x="752" y="659" width="62" height="54"/></clipPath></defs>
<g clip-path="url(#fk4)"><text x="351" y="688.8" font-size="10.6" text-anchor="end">Property Text</text></g>
<text x="415" y="688.6" font-size="10.6" fill="#000" text-anchor="middle">s</text>
<text x="415" y="699.6" font-size="10.6" fill="#000" text-anchor="middle">c</text>
<text x="415" y="710.6" font-size="10.6" fill="#000" text-anchor="middle">a</text>
<rect x="12" y="713" width="803" height="35" fill="#a8a8a8" />
<rect x="12" y="713" width="803" height="2" fill="url(#k)" />
<rect x="14" y="715" width="801" height="2" fill="url(#w)" />
<rect x="17" y="677" width="285" height="34" fill="#d8d8c0" />
<rect x="17" y="677" width="285" height="2" fill="url(#w)" />
<rect x="17" y="677" width="2" height="34" fill="url(#w)" />
<rect x="17" y="709" width="285" height="2" fill="url(#k)" />
<rect x="300" y="677" width="2" height="34" fill="url(#k)" />
<defs><clipPath id="ecl"><rect x="14" y="680" width="3" height="30"/></clipPath></defs>
<text x="11.5" y="697.6" font-size="11" font-weight="bold" clip-path="url(#ecl)">e</text>
<text x="22.4" y="697.9" font-size="11" font-weight="bold" fill="#000" stroke="#000" stroke-width="0.3" text-anchor="start" textLength="38.6" lengthAdjust="spacingAndGlyphs" >ADD PA</text>
<rect x="65" y="679" width="2" height="30" fill="url(#k)" />
<rect x="68.5" y="681.5" width="82.5" height="25.5" fill="none" stroke="#d03030" stroke-width="1"/>
<rect x="69.5" y="682.5" width="80.5" height="23.5" fill="none" stroke="#f0b8a8" stroke-width="1"/>
<text x="72.9" y="697.9" font-size="11" font-weight="bold" fill="#000" stroke="#000" stroke-width="0.3" text-anchor="start" textLength="39.4" lengthAdjust="spacingAndGlyphs" >Polyline</text>
<rect x="118" y="686" width="29" height="2" fill="url(#w)" />
<rect x="118" y="686" width="2" height="17" fill="url(#w)" />
<rect x="118" y="701" width="29" height="2" fill="url(#k)" />
<rect x="145" y="686" width="2" height="17" fill="url(#k)" />
<path d="M125.5 696 V686.5 H134.5 L138.5 690.5 V694 M125.5 696 L129.5 700 H132.5 M127.5 694 V688.5 H133 M129.5 692.5 V690.5 H132 M136 699.5 H138.5 V697" fill="none" stroke="#000" stroke-width="1.1" stroke-dasharray="2.2 1" shape-rendering="auto"/>
<rect x="133" y="690" width="2" height="10" fill="#000" />
<rect x="129" y="694" width="10" height="2" fill="#000" />
<rect x="216" y="681" width="2" height="25" fill="url(#k)" />
<rect x="160" y="704" width="58" height="2" fill="url(#k)" />
<text x="164" y="697.6" font-size="11" font-weight="bold" fill="#000" stroke="#000" stroke-width="0.3" text-anchor="start" textLength="47" lengthAdjust="spacingAndGlyphs" >Options...</text>
<ellipse cx="186" cy="694.5" rx="28" ry="25.5" fill="none" stroke="#c83030" stroke-width="1.05" shape-rendering="auto"/>
<rect x="217" y="682" width="1" height="1" fill="#000" />
<rect x="219" y="682" width="1" height="1" fill="#000" />
<rect x="221" y="682" width="1" height="1" fill="#000" />
<rect x="223" y="682" width="1" height="1" fill="#000" />
<rect x="225" y="682" width="1" height="1" fill="#000" />
<rect x="227" y="682" width="1" height="1" fill="#000" />
<rect x="229" y="682" width="1" height="1" fill="#000" />
<rect x="231" y="682" width="1" height="1" fill="#000" />
<rect x="233" y="682" width="1" height="1" fill="#000" />
<rect x="235" y="682" width="1" height="1" fill="#000" />
<rect x="237" y="682" width="1" height="1" fill="#000" />
<rect x="239" y="682" width="1" height="1" fill="#000" />
<rect x="241" y="682" width="1" height="1" fill="#000" />
<rect x="243" y="682" width="1" height="1" fill="#000" />
<rect x="245" y="682" width="1" height="1" fill="#000" />
<rect x="247" y="682" width="1" height="1" fill="#000" />
<rect x="249" y="682" width="1" height="1" fill="#000" />
<rect x="251" y="682" width="1" height="1" fill="#000" />
<rect x="253" y="682" width="1" height="1" fill="#000" />
<rect x="217" y="682" width="1" height="23" fill="#000" />
<rect x="217" y="682" width="1" height="23" fill="url(#k)" />
<rect x="217" y="704" width="37" height="1" fill="url(#k)" />
<rect x="222" y="686" width="31" height="2" fill="url(#w)" />
<rect x="222" y="686" width="2" height="17" fill="url(#w)" />
<rect x="222" y="701" width="31" height="2" fill="url(#k)" />
<rect x="251" y="686" width="2" height="17" fill="url(#k)" />
<text x="229" y="696.3" font-size="11" font-weight="bold" fill="#000" stroke="#000" stroke-width="0.3" text-anchor="start" textLength="14.7" lengthAdjust="spacingAndGlyphs" >OK</text>
<rect x="255" y="681" width="2" height="27" fill="url(#w)" />
<rect x="257" y="682" width="42" height="2" fill="url(#w)" />
<rect x="257" y="682" width="2" height="24" fill="url(#w)" />
<rect x="257" y="704" width="42" height="2" fill="url(#k)" />
<rect x="297" y="682" width="2" height="24" fill="url(#k)" />
<text x="260.3" y="697.5" font-size="11" font-weight="bold" fill="#000" stroke="#000" stroke-width="0.3" text-anchor="start" textLength="33" lengthAdjust="spacingAndGlyphs" >Cancel</text>
<rect x="0" y="751" width="2" height="10" fill="#cccccc" />
<rect x="0" y="759" width="10" height="2" fill="#cccccc" />
<rect x="0" y="751" width="5" height="1" fill="#fff" />
<rect x="4" y="752" width="1" height="5" fill="#777" />
<rect x="10" y="30" width="809" height="2" fill="url(#k)" />
<rect x="10" y="30" width="2" height="722" fill="url(#k)" />
<rect x="12" y="32" width="805" height="2" fill="url(#w)" />
<rect x="12" y="32" width="2" height="718" fill="url(#w)" />
<rect x="815" y="32" width="2" height="718" fill="url(#k)" />
<rect x="12" y="748" width="805" height="2" fill="url(#k)" />
<rect x="817" y="30" width="2" height="722" fill="url(#w)" />
<rect x="10" y="750" width="809" height="2" fill="url(#w)" />
</svg></body></html>
